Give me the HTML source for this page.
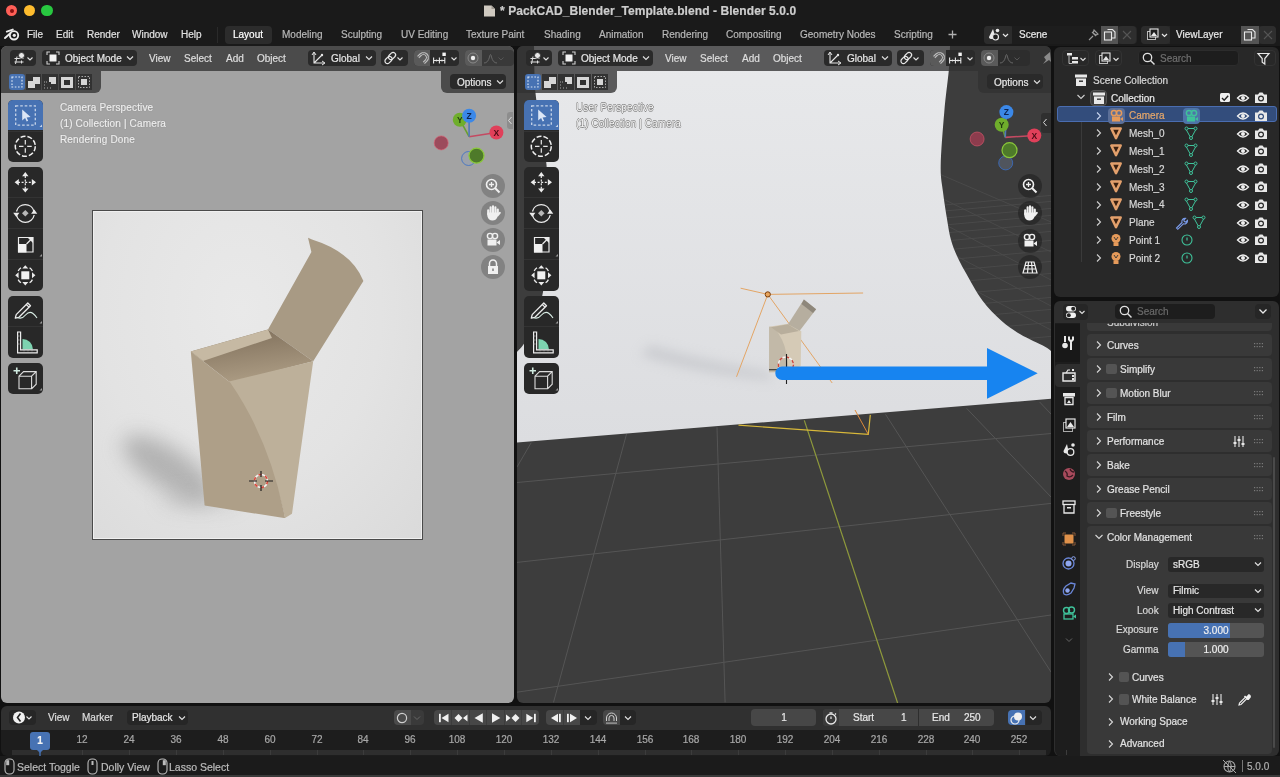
<!DOCTYPE html><html><head><meta charset="utf-8"><style>
*{margin:0;padding:0;box-sizing:border-box}
html,body{width:1280px;height:777px;overflow:hidden;background:#141414;font-family:"Liberation Sans",sans-serif;}
body{position:relative}
.a{position:absolute}
.t{position:absolute;white-space:nowrap;font-size:10px;line-height:12px;color:#dcdcdc;will-change:transform;-webkit-text-stroke:0.2px currentColor}
.btn{position:absolute;background:#2a2a2a;border-radius:4px}
svg{position:absolute;overflow:visible}
</style></head><body><div class="a" style="left:0px;top:0px;width:1280px;height:777px;background:#111111;border-radius:0px;"></div>
<div class="a" style="left:0px;top:0px;width:1280px;height:23px;background:#1a1a1a;border-radius:0px;"></div>
<div class="a" style="left:0px;top:23px;width:1280px;height:22.5px;background:#1a1a1a;border-radius:0px;"></div>
<div class="a" style="left:5.8px;top:4.8px;width:11.6px;height:11.6px;border-radius:50%;background:#ff5f57"></div>
<div class="a" style="left:23.7px;top:4.8px;width:11.6px;height:11.6px;border-radius:50%;background:#febc2e"></div>
<div class="a" style="left:41.400000000000006px;top:4.8px;width:11.6px;height:11.6px;border-radius:50%;background:#28c840"></div>
<div class="a" style="left:9.6px;top:8.6px;width:4px;height:4px;border-radius:50%;background:#8a0f0f"></div>
<svg style="left:483px;top:5px;" width="13" height="12" viewBox="0 0 13 12"><path d="M1 0.5h7.5l3.5 3.5v7.5h-11z" fill="#cfc9c0"/><path d="M8.5 0.5v3.5h3.5" fill="#9e9890"/></svg>
<div class="t" style="left:499.7px;top:4.1px;font-size:12px;line-height:14px;color:#cdcdcd;font-weight:bold;letter-spacing:0.075px">* PackCAD_Blender_Template.blend - Blender 5.0.0</div>
<svg style="left:4px;top:28px;" width="18" height="14" viewBox="0 0 18 14"><circle cx="10" cy="7.3" r="4.2" fill="none" stroke="#ececec" stroke-width="1.9"/><circle cx="10.3" cy="7.3" r="1.6" fill="#ececec"/><path d="M2.8 3.6 L8.8 1.6 M1 10 L6.6 5" stroke="#ececec" stroke-width="1.9" stroke-linecap="round"/></svg>
<div class="t" style="left:27.3px;top:28.200000000000003px;font-size:10px;line-height:14px;color:#e0e0e0;font-weight:normal;">File</div>
<div class="t" style="left:56px;top:28.200000000000003px;font-size:10px;line-height:14px;color:#e0e0e0;font-weight:normal;">Edit</div>
<div class="t" style="left:87px;top:28.200000000000003px;font-size:10px;line-height:14px;color:#e0e0e0;font-weight:normal;">Render</div>
<div class="t" style="left:132px;top:28.200000000000003px;font-size:10px;line-height:14px;color:#e0e0e0;font-weight:normal;">Window</div>
<div class="t" style="left:181px;top:28.200000000000003px;font-size:10px;line-height:14px;color:#e0e0e0;font-weight:normal;">Help</div>
<div class="a" style="left:216.5px;top:27px;width:1px;height:16px;background:#2a2a2a;border-radius:0px;"></div>
<div class="a" style="left:224.5px;top:26px;width:47px;height:18px;background:#2c2c2c;border-radius:4px;"></div>
<div class="t" style="left:232.8px;top:28.200000000000003px;font-size:10px;line-height:14px;color:#ffffff;font-weight:normal;">Layout</div>
<div class="t" style="left:281.6px;top:28.200000000000003px;font-size:10px;line-height:14px;color:#b8b8b8;font-weight:normal;">Modeling</div>
<div class="t" style="left:341px;top:28.200000000000003px;font-size:10px;line-height:14px;color:#b8b8b8;font-weight:normal;">Sculpting</div>
<div class="t" style="left:401px;top:28.200000000000003px;font-size:10px;line-height:14px;color:#b8b8b8;font-weight:normal;">UV Editing</div>
<div class="t" style="left:466px;top:28.200000000000003px;font-size:10px;line-height:14px;color:#b8b8b8;font-weight:normal;">Texture Paint</div>
<div class="t" style="left:544.4px;top:28.200000000000003px;font-size:10px;line-height:14px;color:#b8b8b8;font-weight:normal;">Shading</div>
<div class="t" style="left:599px;top:28.200000000000003px;font-size:10px;line-height:14px;color:#b8b8b8;font-weight:normal;">Animation</div>
<div class="t" style="left:662.3px;top:28.200000000000003px;font-size:10px;line-height:14px;color:#b8b8b8;font-weight:normal;">Rendering</div>
<div class="t" style="left:725.6px;top:28.200000000000003px;font-size:10px;line-height:14px;color:#b8b8b8;font-weight:normal;">Compositing</div>
<div class="t" style="left:800.3px;top:28.200000000000003px;font-size:10px;line-height:14px;color:#b8b8b8;font-weight:normal;">Geometry Nodes</div>
<div class="t" style="left:894px;top:28.200000000000003px;font-size:10px;line-height:14px;color:#b8b8b8;font-weight:normal;">Scripting</div>
<svg style="left:947.5px;top:30px;" width="9" height="9" viewBox="0 0 9 9"><path d="M4.5 0.5v8 M0.5 4.5h8" stroke="#b0b0b0" stroke-width="1.3"/></svg>
<div class="a" style="left:983.5px;top:25.5px;width:153px;height:18px;background:#262626;border-radius:4px;"></div>
<div class="a" style="left:983.5px;top:25.5px;width:29px;height:18px;background:#2c2c2c;border-radius:4px;"></div>
<div class="a" style="left:1012px;top:25.5px;width:89px;height:18px;background:#1d1d1d;border-radius:0px;"></div>
<div class="a" style="left:1101px;top:25.5px;width:17px;height:18px;background:#545454;border-radius:0px;"></div>
<div class="a" style="left:1118px;top:25.5px;width:18px;height:18px;background:#2e2e2e;border-radius:4px;"></div>
<svg style="left:987px;top:27px;" width="24" height="15" viewBox="0 0 24 15"><path d="M6 2 L2 10 Q2 12 5 12 L9 12 Z" fill="#e8e8e8"/><circle cx="10.5" cy="3.5" r="1.8" fill="#e8e8e8"/><circle cx="8.5" cy="10" r="3" fill="#1d1d1d" stroke="#e8e8e8" stroke-width="1.2"/><path d="M16 7l2.5 2.5l2.5-2.5" fill="none" stroke="#e8e8e8" stroke-width="1.2"/></svg>
<div class="t" style="left:1018.5px;top:28.200000000000003px;font-size:10px;line-height:14px;color:#e8e8e8;font-weight:normal;">Scene</div>
<svg style="left:1086px;top:27px;" width="14" height="15" viewBox="0 0 14 15"><path d="M3 13 L7 9 M6 5 L10 9 M8 3 L12 7 L10 8 L7 6 Z" fill="none" stroke="#9a9a9a" stroke-width="1.1"/></svg>
<svg style="left:1103px;top:28px;" width="14" height="13" viewBox="0 0 14 13"><rect x="1.5" y="4" width="7" height="8" fill="none" stroke="#e8e8e8" stroke-width="1.1"/><path d="M4.5 1.5h5l2.5 2.5v6h-3" fill="none" stroke="#e8e8e8" stroke-width="1.1"/></svg>
<svg style="left:1121px;top:29px;" width="12" height="11" viewBox="0 0 12 11"><path d="M2 2L10 10M10 2L2 10" stroke="#555" stroke-width="1.1"/></svg>
<div class="a" style="left:1141px;top:25.5px;width:135px;height:18px;background:#262626;border-radius:4px;"></div>
<div class="a" style="left:1141px;top:25.5px;width:29px;height:18px;background:#2c2c2c;border-radius:4px;"></div>
<div class="a" style="left:1170px;top:25.5px;width:71px;height:18px;background:#1d1d1d;border-radius:0px;"></div>
<div class="a" style="left:1241px;top:25.5px;width:18px;height:18px;background:#545454;border-radius:0px;"></div>
<div class="a" style="left:1259px;top:25.5px;width:17px;height:18px;background:#2e2e2e;border-radius:4px;"></div>
<svg style="left:1145px;top:27px;" width="24" height="15" viewBox="0 0 24 15"><rect x="2.5" y="4.5" width="8" height="8" fill="#1d1d1d" stroke="#bbb" stroke-width="1"/><rect x="5" y="2" width="8" height="8" fill="#1d1d1d" stroke="#e8e8e8" stroke-width="1.1"/><path d="M6 9 L9 5 L12 9Z" fill="#e8e8e8"/><path d="M17 7l2.5 2.5l2.5-2.5" fill="none" stroke="#e8e8e8" stroke-width="1.2"/></svg>
<div class="t" style="left:1176px;top:28.200000000000003px;font-size:10px;line-height:14px;color:#e8e8e8;font-weight:normal;">ViewLayer</div>
<svg style="left:1243px;top:28px;" width="14" height="13" viewBox="0 0 14 13"><rect x="1.5" y="4" width="7" height="8" fill="none" stroke="#e8e8e8" stroke-width="1.1"/><path d="M4.5 1.5h5l2.5 2.5v6h-3" fill="none" stroke="#e8e8e8" stroke-width="1.1"/></svg>
<svg style="left:1262px;top:29px;" width="12" height="11" viewBox="0 0 12 11"><path d="M2 2L10 10M10 2L2 10" stroke="#555" stroke-width="1.1"/></svg>
<div class="a" style="left:0px;top:756px;width:1280px;height:21px;background:#1b1b1b;border-radius:0px;"></div>
<div class="a" style="left:0px;top:775px;width:1280px;height:2px;background:#3a3a3a;border-radius:0px;"></div>
<div class="a" style="left:1px;top:46px;width:513px;height:657px;background:#a3a3a3;border-radius:6px;overflow:hidden"></div>
<div class="a" style="left:92px;top:210px;width:331px;height:330px;background:#dcdcdc;border-radius:0px;border:1px solid #4a4a4a;"></div>
<div class="a" style="left:93px;top:211px;width:329px;height:328px;background:radial-gradient(ellipse at 45% 30%,#e9e9e9 0%,#e3e3e3 55%,#dadada 100%);border:1px solid #f0f0f0"></div>
<svg style="left:0px;top:0px;" width="1280" height="777" viewBox="0 0 1280 777">
<defs>
<filter id="blur1" filterUnits="userSpaceOnUse" x="0" y="300" width="500" height="400"><feGaussianBlur stdDeviation="10"/></filter><linearGradient id="ins" x1="0" y1="0" x2="0.3" y2="1"><stop offset="0" stop-color="#7c6c58"/><stop offset="1" stop-color="#aa9a82"/></linearGradient>
</defs>
<ellipse cx="168" cy="468" rx="52" ry="20" transform="rotate(33 168 468)" fill="#8c8c8c" opacity="0.55" filter="url(#blur1)"/><ellipse cx="200" cy="500" rx="40" ry="8" fill="#9a9a9a" opacity="0.35" filter="url(#blur1)"/>
<path d="M268 329.6 L311.4 252 L308 237.7 L312 239.5 Q352 252 363.4 281 L313.2 361.3 Z" fill="#a89a84"/>

<path d="M190.8 351.6 L268 329.6 L313.2 361.3 L230.2 382.5 Z" fill="url(#ins)"/>
<path d="M190.8 351.6 L268 329.6 L272 338 L203 361Z" fill="#c6b9a3"/>
<path d="M225 382.5 L313.2 361.3 Q302 440 292 513.8 L285 518 Q268 440 225 382.5Z" fill="#bdb09a"/><path d="M190.8 351.6 L230.2 382.5 Q270 440 285 518 L284 518 L204.6 505.6 L197 420 Z" fill="#ae9f88"/>

</svg>
<svg style="left:247.5px;top:468px;" width="26" height="26" viewBox="0 0 26 26"><circle cx="13" cy="13" r="6.5" fill="none" stroke="#f2f2f2" stroke-width="1.6"/><circle cx="13" cy="13" r="6.5" fill="none" stroke="#d9483c" stroke-width="1.6" stroke-dasharray="3.4 3.4"/><path d="M1 13h8 M17 13h8 M13 3v6 M13 17v6" stroke="#1e1e1e" stroke-width="1.2"/></svg>
<div class="a" style="left:1px;top:46px;width:513px;height:25px;background:rgba(50,50,50,0.78);border-radius:0px;border-radius:6px 6px 0 0"></div>
<div class="a" style="left:1px;top:71px;width:99.5px;height:22px;background:rgba(50,50,50,0.78);border-radius:0px;border-radius:0 0 6px 0"></div>
<div class="a" style="left:9.5px;top:49.7px;width:26.7px;height:16.3px;background:#2a2a2a;border-radius:4px;"></div>
<svg style="left:13px;top:51px;" width="22" height="14" viewBox="0 0 22 14"><path d="M1.5 7.5h9 M1.5 11h9 M4 5.5l-1.5 7.5 M8.5 9.5v3" stroke="#e0e0e0" stroke-width="1" fill="none"/><circle cx="8.5" cy="4.5" r="3" fill="#e8e8e8" stroke="#2a2a2a" stroke-width="0.8"/><path d="M14.5 6.5l2.5 2.5l2.5-2.5" fill="none" stroke="#e0e0e0" stroke-width="1.1"/></svg>
<div class="a" style="left:42.3px;top:49.7px;width:94.8px;height:16.3px;background:#2a2a2a;border-radius:4px;"></div>
<svg style="left:46px;top:51px;" width="14" height="14" viewBox="0 0 14 14"><path d="M1 4V1h3 M10 1h3v3 M13 10v3h-3 M4 13H1v-3" stroke="#cfcfcf" stroke-width="1.1" fill="none"/><rect x="3.5" y="3.5" width="7" height="7" fill="#f2f2f2"/></svg>
<div class="t" style="left:64.6px;top:51.5px;font-size:10px;line-height:14px;color:#e6e6e6;font-weight:normal;">Object Mode</div>
<svg style="left:126px;top:55px;" width="8" height="6" viewBox="0 0 8 6"><path d="M1 1.5l3 3l3-3" fill="none" stroke="#e0e0e0" stroke-width="1.1"/></svg>
<div class="t" style="left:148.9px;top:51.5px;font-size:10px;line-height:14px;color:#dedede;font-weight:normal;">View</div>
<div class="t" style="left:184.2px;top:51.5px;font-size:10px;line-height:14px;color:#dedede;font-weight:normal;">Select</div>
<div class="t" style="left:225.9px;top:51.5px;font-size:10px;line-height:14px;color:#dedede;font-weight:normal;">Add</div>
<div class="t" style="left:257.4px;top:51.5px;font-size:10px;line-height:14px;color:#dedede;font-weight:normal;">Object</div>
<div class="a" style="left:308px;top:49.7px;width:67.5px;height:16.3px;background:#2a2a2a;border-radius:4px;"></div>
<svg style="left:311px;top:51px;" width="16" height="14" viewBox="0 0 16 14"><path d="M3 2v10h10 M3 12l8-8" stroke="#e6e6e6" stroke-width="1.1" fill="none"/><path d="M1 4l2-3l2 3 M11 10l3 2l-3 2" stroke="#e6e6e6" stroke-width="1" fill="none"/><circle cx="11" cy="4" r="1.2" fill="#e6e6e6"/></svg>
<div class="t" style="left:330.8px;top:51.5px;font-size:10px;line-height:14px;color:#e6e6e6;font-weight:normal;">Global</div>
<svg style="left:365px;top:55px;" width="8" height="6" viewBox="0 0 8 6"><path d="M1 1.5l3 3l3-3" fill="none" stroke="#e0e0e0" stroke-width="1.1"/></svg>
<div class="a" style="left:381.2px;top:49.7px;width:27px;height:16.3px;background:#2a2a2a;border-radius:4px;"></div>
<svg style="left:383px;top:51px;" width="22" height="14" viewBox="0 0 22 14"><rect x="1.5" y="6.5" width="8" height="5" rx="2.5" transform="rotate(-45 5.5 9)" fill="none" stroke="#e6e6e6" stroke-width="1.2"/><rect x="5" y="2.5" width="8" height="5" rx="2.5" transform="rotate(-45 9 5)" fill="none" stroke="#e6e6e6" stroke-width="1.2"/><path d="M14.5 6.5l2.5 2.5l2.5-2.5" fill="none" stroke="#e0e0e0" stroke-width="1.1"/></svg>
<div class="a" style="left:414px;top:49.7px;width:44.8px;height:16.3px;background:#2a2a2a;border-radius:4px;"></div>
<div class="a" style="left:414px;top:49.7px;width:16px;height:16.3px;background:#5a5a5a;border-radius:0px;border-radius:4px 0 0 4px"></div>
<svg style="left:414.5px;top:50.5px;" width="15" height="15" viewBox="0 0 15 15"><path d="M3.17 6.17 L5.67 3.67 A4 4 0 0 1 11.33 9.33 L8.83 11.83" fill="none" stroke="#bdbdbd" stroke-width="3"/><path d="M2.7 6.6 L5.67 3.67 A4 4 0 0 1 11.33 9.33 L8.4 12.3" fill="none" stroke="#5a5a5a" stroke-width="1"/></svg>
<svg style="left:431px;top:51px;" width="26" height="14" viewBox="0 0 26 14"><path d="M2.6 6.5v6 M8.4 6.5v6 M13.8 6.5v6 M2.6 9.5h11.2" stroke="#e6e6e6" stroke-width="1.1" fill="none"/><circle cx="5.5" cy="9.5" r="0.9" fill="#e6e6e6"/><circle cx="11" cy="9.5" r="0.9" fill="#e6e6e6"/><rect x="11.4" y="1.6" width="3.4" height="3.4" fill="#f4f4f4"/><path d="M20.5 6.5l2.5 2.5l2.5-2.5" fill="none" stroke="#e0e0e0" stroke-width="1.1"/></svg>
<div class="a" style="left:464.7px;top:49.7px;width:49px;height:16.3px;background:rgba(40,40,40,0.5);border-radius:4px;"></div>
<div class="a" style="left:464.7px;top:49.7px;width:17px;height:16.3px;background:#5a5a5a;border-radius:0px;border-radius:4px 0 0 4px"></div>
<svg style="left:466px;top:51px;" width="14" height="14" viewBox="0 0 14 14"><circle cx="7" cy="7" r="5" fill="none" stroke="#8a8a8a" stroke-width="1"/><circle cx="7" cy="7" r="2.2" fill="#f0f0f0"/></svg>
<svg style="left:483px;top:51px;" width="20" height="14" viewBox="0 0 20 14"><path d="M1 12 Q5 12 6.5 6 Q7.5 1 8.5 6 Q10 12 14 12" fill="none" stroke="#666" stroke-width="1"/><path d="M15.5 6.5l2.5 2.5l2.5-2.5" fill="none" stroke="#555" stroke-width="1"/></svg>
<div class="a" style="left:9px;top:74px;width:16px;height:15.5px;background:#4772b3;border-radius:3px;"></div>
<svg style="left:9px;top:74px;" width="16" height="16" viewBox="0 0 16 16"><rect x="3" y="3" width="10" height="10" fill="none" stroke="#dbe6f5" stroke-width="1.2" stroke-dasharray="1.6 1.6"/></svg>
<div class="a" style="left:26px;top:74px;width:15px;height:15.5px;background:#323232;border-radius:0px;"></div>
<svg style="left:26px;top:74px;" width="15" height="16" viewBox="0 0 15 16"><path d="M2 7h5V3h7v7H9v4H2z" fill="#d6d6d6"/></svg>
<div class="a" style="left:42px;top:74px;width:16px;height:15.5px;background:#323232;border-radius:0px;"></div>
<svg style="left:42px;top:74px;" width="16" height="16" viewBox="0 0 16 16"><path d="M7 3h7v7H9V8H7z" fill="#d6d6d6"/><path d="M2 8h1 M2 11h1 M2 14h1 M5 14h1 M8 14h1 M4 8h1" stroke="#aaa" stroke-width="1"/></svg>
<div class="a" style="left:59px;top:74px;width:16px;height:15.5px;background:#323232;border-radius:0px;"></div>
<svg style="left:59px;top:74px;" width="16" height="16" viewBox="0 0 16 16"><path d="M2 3h12v11H2z M5 6v5h6V6z" fill="#d6d6d6" fill-rule="evenodd"/></svg>
<div class="a" style="left:76px;top:74px;width:16px;height:15.5px;background:#323232;border-radius:0px;"></div>
<svg style="left:76px;top:74px;" width="16" height="16" viewBox="0 0 16 16"><rect x="2.5" y="2.5" width="11" height="11" fill="none" stroke="#aaa" stroke-width="1" stroke-dasharray="1.5 1.5"/><rect x="5" y="5" width="6" height="6" fill="#d6d6d6"/></svg>
<div class="a" style="left:441px;top:71px;width:73px;height:22px;background:rgba(50,50,50,0.78);border-radius:0px;border-radius:0 0 0 6px"></div>
<div class="a" style="left:450.4px;top:74px;width:55.9px;height:15.3px;background:#2a2a2a;border-radius:4px;"></div>
<div class="t" style="left:457px;top:75.5px;font-size:10px;line-height:14px;color:#e6e6e6;font-weight:normal;">Options</div>
<svg style="left:496px;top:79.3px;" width="8" height="6" viewBox="0 0 8 6"><path d="M1 1.5l3 3l3-3" fill="none" stroke="#e0e0e0" stroke-width="1.1"/></svg>
<div class="a" style="left:8.3px;top:100.3px;width:35px;height:62px;background:#282828;border-radius:5px;"></div>
<div class="a" style="left:8.3px;top:130.8px;width:35px;height:1px;background:#333333;border-radius:0px;"></div>
<div class="a" style="left:8.3px;top:166.8px;width:35px;height:124px;background:#282828;border-radius:5px;"></div>
<div class="a" style="left:8.3px;top:197.3px;width:35px;height:1px;background:#333333;border-radius:0px;"></div>
<div class="a" style="left:8.3px;top:228.3px;width:35px;height:1px;background:#333333;border-radius:0px;"></div>
<div class="a" style="left:8.3px;top:259.3px;width:35px;height:1px;background:#333333;border-radius:0px;"></div>
<div class="a" style="left:8.3px;top:295.9px;width:35px;height:62px;background:#282828;border-radius:5px;"></div>
<div class="a" style="left:8.3px;top:326.4px;width:35px;height:1px;background:#333333;border-radius:0px;"></div>
<div class="a" style="left:8.3px;top:363px;width:35px;height:31px;background:#282828;border-radius:5px;"></div>
<div class="a" style="left:8.3px;top:100.3px;width:35px;height:30px;background:#4772b3;border-radius:0px;border-radius:5px 5px 0 0"></div>
<svg style="left:8.3px;top:100.3px;" width="35" height="30" viewBox="0 0 35 30"><rect x="7.7" y="5.8" width="19.6" height="19.3" fill="none" stroke="#c6d3e8" stroke-width="1.3" stroke-dasharray="2.6 1.9"/><path d="M14.2 9.5v11l2.9-2.6l1.6 3.6l1.4-0.7l-1.5-3.4l4-0.3z" fill="#dce6f6"/><path d="M31.5 27l2.5-2.5v2.5z" fill="#c6d3e8"/></svg>
<svg style="left:8.3px;top:131px;" width="35" height="31" viewBox="0 0 35 31"><circle cx="17.3" cy="15.3" r="10" fill="none" stroke="#f0f0f0" stroke-width="1.5" stroke-dasharray="5 2"/><path d="M17.3 9v4.5 M17.3 17.2v4.5 M11 15.3h4.5 M19.2 15.3h4.5" stroke="#e8e8e8" stroke-width="1.2"/></svg>
<svg style="left:8.3px;top:166.8px;" width="35" height="31" viewBox="0 0 35 31"><path d="M17.3 9v13 M10 15.3h14.6" stroke="#ececec" stroke-width="1.2" stroke-dasharray="2 1.6"/><path d="M17.3 5l-3.2 4.2h6.4z M17.3 25.6l-3.2-4.2h6.4z M6.6 15.3l4.2-3.2v6.4z M28 15.3l-4.2-3.2v6.4z" fill="#ececec"/></svg>
<svg style="left:8.3px;top:197.8px;" width="35" height="31" viewBox="0 0 35 31"><path d="M8.5 13.5 A9 9 0 0 1 26 13.5 M26.2 17 A9 9 0 0 1 8.5 17" fill="none" stroke="#ececec" stroke-width="1.3"/><path d="M17.3 12l3.3 3.3l-3.3 3.3l-3.3-3.3z" fill="#b8b8b8"/><path d="M5.2 14.8h6.2l-3.1 4.2z M23.1 15.8h6.2l-3.1-4.2z" fill="#ececec"/></svg>
<svg style="left:8.3px;top:228.8px;" width="35" height="31" viewBox="0 0 35 31"><path d="M10.5 8.5h14.5v14.5h-14.5z" fill="none" stroke="#ececec" stroke-width="1.2"/><rect x="10" y="15" width="8.5" height="8.5" fill="#f2f2f2"/><path d="M18.5 15l5.5-5.5" stroke="#ececec" stroke-width="1.3"/><path d="M20 9h5v5z" fill="#ececec"/><path d="M31.5 27.5l2.5-2.5v2.5z" fill="#9a9a9a"/></svg>
<svg style="left:8.3px;top:259.8px;" width="35" height="31" viewBox="0 0 35 31"><path d="M10.2 11 A8.5 8.5 0 0 1 13 7.8 M21.6 7.8 A8.5 8.5 0 0 1 24.4 11 M24.4 19.6 A8.5 8.5 0 0 1 21.6 22.8 M13 22.8 A8.5 8.5 0 0 1 10.2 19.6" fill="none" stroke="#ececec" stroke-width="1.3"/><rect x="13.3" y="11.3" width="8" height="8" fill="#f2f2f2"/><path d="M17.3 5.2l-3 3.4h6z M17.3 25.4l-3-3.4h6z M7.2 15.3l3.4-3v6z M27.4 15.3l-3.4-3v6z" fill="#ececec"/></svg>
<svg style="left:8.3px;top:295.9px;" width="35" height="31" viewBox="0 0 35 31"><path d="M8.2 18.6l11.6-11.6l2.7 2.7l-11.6 11.6l-3.6 0.9z" fill="none" stroke="#ececec" stroke-width="1.3" stroke-linejoin="round"/><path d="M18.3 8.5l2.7 2.7" stroke="#ececec" stroke-width="1.2"/><path d="M9.5 21.5 Q14 23.5 17.5 19 Q21.5 14.5 25 17.5 Q27.5 19.5 29 22" fill="none" stroke="#d8ece4" stroke-width="1.1"/><path d="M31.5 27.5l2.5-2.5v2.5z" fill="#9a9a9a"/></svg>
<svg style="left:8.3px;top:326.9px;" width="35" height="31" viewBox="0 0 35 31"><path d="M14.5 22.5V12 A10.5 10.5 0 0 1 25 22.5z" fill="#7dd3b0"/><path d="M9.6 5v20.8h19.6v-3h-16.6V5z" fill="none" stroke="#ececec" stroke-width="1.2"/><path d="M9.6 9h2 M9.6 13h2 M9.6 17h2 M16 22.8v1.5 M20 22.8v1.5 M24 22.8v1.5" stroke="#aaa" stroke-width="0.8"/></svg>
<svg style="left:8.3px;top:363px;" width="35" height="31" viewBox="0 0 35 31"><path d="M11 13.2h12.6v12.6H11z M11 13.2l4.6-4.6h12.6v12.6l-4.6 4.6 M23.6 13.2l4.6-4.6" fill="none" stroke="#dcdcdc" stroke-width="1.1"/><path d="M5.5 7.8h6.5 M8.75 4.5v6.5" stroke="#cfe9df" stroke-width="1.6"/><path d="M31.5 27.5l2.5-2.5v2.5z" fill="#9a9a9a"/></svg>
<svg style="left:0px;top:0px;" width="1280" height="777" viewBox="0 0 1280 777"><circle cx="441.2" cy="142.9" r="7" fill="#9b3c50" fill-opacity="0.85" stroke="#e05a70" stroke-opacity="0.6" stroke-width="1"/><circle cx="468.6" cy="158.5" r="7" fill="#8aa0c0" fill-opacity="0.25" stroke="#3a6fc8" stroke-opacity="0.8" stroke-width="1"/><circle cx="476.5" cy="155.7" r="7.5" fill="#4e7a2a" stroke="#8ac83a" stroke-width="1.2"/><line x1="469.1" y1="136.7" x2="459.8" y2="119.7" stroke="#6aa030" stroke-width="1.6"/><line x1="469.1" y1="136.7" x2="496.4" y2="132.5" stroke="#c44a62" stroke-width="1.6"/><line x1="469.1" y1="136.7" x2="469.1" y2="115.8" stroke="#4f78b8" stroke-width="1.6"/><circle cx="459.8" cy="119.7" r="7" fill="#6fae2c"/><text x="459.8" y="122.7" font-size="8.5" font-weight="bold" text-anchor="middle" fill="#1f3a10" font-family="Liberation Sans">Y</text><circle cx="469.1" cy="115.8" r="7" fill="#3b88e8"/><text x="469.1" y="118.8" font-size="8.5" font-weight="bold" text-anchor="middle" fill="#0d2350" font-family="Liberation Sans">Z</text><circle cx="496.4" cy="132.5" r="7" fill="#e0405a"/><text x="496.4" y="135.5" font-size="8.5" font-weight="bold" text-anchor="middle" fill="#4a0a14" font-family="Liberation Sans">X</text></svg>
<div class="a" style="left:481.4px;top:173.8px;width:24px;height:24px;border-radius:50%;background:rgba(90,90,90,0.45)"></div>
<div class="a" style="left:481.4px;top:201px;width:24px;height:24px;border-radius:50%;background:rgba(90,90,90,0.45)"></div>
<div class="a" style="left:481.4px;top:227.6px;width:24px;height:24px;border-radius:50%;background:rgba(90,90,90,0.45)"></div>
<div class="a" style="left:481.4px;top:254.5px;width:24px;height:24px;border-radius:50%;background:rgba(90,90,90,0.45)"></div>
<svg style="left:481.4px;top:173.8px;" width="24" height="24" viewBox="0 0 24 24"><circle cx="10.5" cy="10.5" r="5" fill="none" stroke="#f0f0f0" stroke-width="1.6"/><path d="M14 14l4.5 4.5" stroke="#f0f0f0" stroke-width="2"/><path d="M8 10.5h5 M10.5 8v5" stroke="#f0f0f0" stroke-width="1.3"/></svg>
<svg style="left:481.4px;top:201px;" width="24" height="24" viewBox="0 0 24 24"><path d="M7.2 13.5 V9.2 M9.6 12 V6.2 M12 12 V5.3 M14.4 12 V6.2 M16.8 12.5 V8.5" stroke="#f0f0f0" stroke-width="2.1" stroke-linecap="round"/><path d="M6.2 12.5 L6.5 15.5 Q7.5 19.5 11.5 19.5 Q15 19.5 16.2 16.5 L17.8 12 L16 11.5 L6.5 11.5Z" fill="#f0f0f0"/><path d="M16.5 14.5 L18.8 11.8" stroke="#f0f0f0" stroke-width="2" stroke-linecap="round"/></svg>
<svg style="left:481.4px;top:227.6px;" width="24" height="24" viewBox="0 0 24 24"><circle cx="9" cy="8" r="2.6" fill="none" stroke="#f0f0f0" stroke-width="1.4"/><circle cx="14" cy="8" r="2.6" fill="none" stroke="#f0f0f0" stroke-width="1.4"/><rect x="6.5" y="11.5" width="9" height="6" fill="#f0f0f0"/><path d="M15.5 14.5l3.5-2.5v5z" fill="#f0f0f0"/></svg>
<svg style="left:481.4px;top:254.5px;" width="24" height="24" viewBox="0 0 24 24"><path d="M8.5 11V8.5 A3.5 3.5 0 0 1 15.5 8.5V11" fill="none" stroke="#f0f0f0" stroke-width="1.5"/><rect x="7" y="11" width="10" height="8" fill="#f0f0f0"/><rect x="11.3" y="13.5" width="1.4" height="2.5" fill="#777"/></svg>
<div class="a" style="left:507px;top:112px;width:6px;height:17px;background:rgba(120,120,120,0.5);border-radius:0px;border-radius:3px 0 0 3px"></div>
<svg style="left:507px;top:115px;" width="6" height="11" viewBox="0 0 6 11"><path d="M4.5 2l-3 3.5l3 3.5" fill="none" stroke="#ddd" stroke-width="1"/></svg>
<div class="t" style="left:60px;top:100.5px;font-size:10px;line-height:14px;color:#f0f0f0;font-weight:normal;text-shadow:0 0 1px #666;letter-spacing:0.15px">Camera Perspective</div>
<div class="t" style="left:60px;top:116.5px;font-size:10px;line-height:14px;color:#f0f0f0;font-weight:normal;text-shadow:0 0 1px #666;letter-spacing:0.15px">(1) Collection | Camera</div>
<div class="t" style="left:60px;top:132.5px;font-size:10px;line-height:14px;color:#f0f0f0;font-weight:normal;text-shadow:0 0 1px #666;letter-spacing:0.15px">Rendering Done</div>
<div class="a" style="left:517px;top:46px;width:534px;height:657px;background:#3d3d3d;border-radius:6px;overflow:hidden"></div>
<svg style="left:0px;top:0px;" width="1280" height="777" viewBox="0 0 1280 777">
<defs>
<clipPath id="rclip"><rect x="517" y="46" width="534" height="657" rx="6"/></clipPath>
<linearGradient id="bd" x1="0" y1="0" x2="0" y2="1"><stop offset="0" stop-color="#e8e9eb"/><stop offset="1" stop-color="#dcdde0"/></linearGradient>
<filter id="blur2" x="-50%" y="-50%" width="200%" height="200%"><feGaussianBlur stdDeviation="6"/></filter>
</defs>
<g clip-path="url(#rclip)">
<g stroke="#555555" stroke-width="1" fill="none">
<path d="M517 482.5 L1051 433.5"/>
<path d="M517 562.4 L1051 503.4"/>
<path d="M517 692.2 L1051 615"/>
<path d="M517 467 L531.2 442.7"/>
<path d="M626.6 433.8 L553.5 702.4"/>
<path d="M717 427.3 L725.1 702.4"/>
<path d="M885.5 414.3 L1051 672"/>
<path d="M966.6 408.3 L1051 497"/>
<path d="M1039.6 402 L1051 414"/>
</g>
<g stroke="#4c4c4c" stroke-width="0.8" fill="none"><path d="M940 205.4 L1051 195.4"/><path d="M940 211.4 L1051 201.4"/><path d="M940 218.4 L1051 208.4"/><path d="M940 225.4 L1051 215.4"/><path d="M940 233.4 L1051 223.4"/><path d="M940 241.4 L1051 231.4"/><path d="M940 250.4 L1051 240.4"/><path d="M940 260.4 L1051 250.4"/><path d="M940 271.4 L1051 261.4"/><path d="M940 283.4 L1051 273.4"/><path d="M940 295.4 L1051 285.4"/><path d="M940 307.4 L1051 297.4"/><path d="M940 319.4 L1051 309.4"/><path d="M940 332.4 L1051 322.4"/><path d="M940 346.4 L1051 336.4"/><path d="M940 361.4 L1051 351.4"/><path d="M940 377.4 L1051 367.4"/><path d="M940 395.4 L1051 385.4"/><path d="M930 170 L1051 222"/><path d="M935 195 L1051 252"/><path d="M940 222 L1051 280"/><path d="M945 250 L1051 306"/><path d="M955 280 L1051 330"/><path d="M970 310 L1051 352"/><path d="M990 340 L1051 375"/></g>
<path d="M534 46 L950 46 L950 46 C949.8 50.1 949.8 59.6 948.8 70.6 C947.8 81.6 945.6 96.1 944.3 112.0 C942.9 127.9 940.9 152.7 940.7 166.0 C940.5 179.3 942.0 183.2 943.0 192.0 C944.0 200.8 945.7 211.0 947.0 219.0 C948.3 227.0 949.3 233.8 951.0 240.0 C952.7 246.2 954.5 250.4 957.0 256.0 C959.5 261.6 962.0 266.1 966.2 273.5 C970.4 280.9 976.5 292.6 982.4 300.5 C988.3 308.4 995.1 315.2 1001.4 320.8 C1007.7 326.4 1013.1 330.0 1020.3 334.3 C1027.5 338.6 1039.5 343.7 1044.6 346.5 C1049.7 349.3 1049.9 350.2 1051.0 351.0  L1051 398.8 L517 442.6 L517 352 C518.3 350.3 521.8 347.7 525.0 342.0 C528.2 336.3 533.0 326.3 536.0 318.0 C539.0 309.7 541.2 301.7 543.0 292.0 C544.8 282.3 545.8 273.7 546.5 260.0 C547.2 246.3 547.5 225.8 547.5 210.0 C547.5 194.2 547.6 179.2 546.5 165.0 C545.4 150.8 542.8 137.0 541.0 125.0 C539.2 113.0 536.7 106.2 535.5 93.0 C534.3 79.8 534.2 53.8 534.0 46.0  Z" fill="url(#bd)"/>
<path d="M650 345 Q700 360 770 372 L772 380 Q700 375 640 355Z" fill="#b8babf" opacity="0.5" filter="url(#blur2)"/>
<path d="M804.3 420.4 L897.6 703" stroke="#8f9a3c" stroke-width="1.2"/>
<path d="M738.5 425.2 L868.3 434.4 L870.3 414.9" stroke="#d9b93a" stroke-width="1.2" fill="none"/>
<path d="M855 410 L868.3 434.4" stroke="#e08a3a" stroke-width="1" fill="none"/>
</g>
<g stroke="#e3a565" stroke-width="1" fill="none">
<path d="M740.6 288.2 L767.8 294.4 L863.1 293"/>
<path d="M767.8 294.4 L736.5 376.8"/>
<path d="M767.8 294.4 L832.2 383"/>
</g>
<path d="M769.1 326.7 L787.8 323.7 L801.3 331.2 L800.7 366 L789 372 L769.1 372.3Z" fill="#d5cab6"/>
<path d="M769.1 326.7 L774 327 Q784 340 786 352 Q788 362 789 372 L769.1 372.3Z" fill="#c2b9a8"/>
<path d="M771 327.2 L787.8 324.3 L799 331 L781 334.5Z" fill="#b8ae9c"/>
<path d="M788 324.3 L799.7 330.8 L816.1 309.3 L803.9 299.6Z" fill="#b6ae9f"/>
<path d="M803.9 299.6 L816.1 309.3 L813 313 L801.5 304Z" fill="#8e877b"/>
<circle cx="767.8" cy="294.4" r="2.6" fill="#e8a55c" stroke="#7a3e10" stroke-width="1"/>
<g><circle cx="785.9" cy="364.6" r="7.5" fill="none" stroke="#f4f4f4" stroke-width="1.5"/><circle cx="785.9" cy="364.6" r="7.5" fill="none" stroke="#c9483c" stroke-width="1.5" stroke-dasharray="3.5 3.5"/><path d="M786.5 354v30 M769 369.8h8" stroke="#222" stroke-width="1.1"/></g>
<path d="M782 366.5 L987 366.5 L987 348 L1037.7 373.2 L987 398.8 L987 379.9 L782 379.9 A6.7 6.7 0 0 1 782 366.5Z" fill="#1784f0"/>
</svg>
<div class="a" style="left:517px;top:46px;width:534px;height:25px;background:rgba(50,50,50,0.78);border-radius:0px;border-radius:6px 6px 0 0"></div>
<div class="a" style="left:517px;top:71px;width:99.5px;height:22px;background:rgba(50,50,50,0.78);border-radius:0px;border-radius:0 0 6px 0"></div>
<div class="a" style="left:525.5px;top:49.7px;width:26.7px;height:16.3px;background:#2a2a2a;border-radius:4px;"></div>
<svg style="left:529px;top:51px;" width="22" height="14" viewBox="0 0 22 14"><path d="M1.5 7.5h9 M1.5 11h9 M4 5.5l-1.5 7.5 M8.5 9.5v3" stroke="#e0e0e0" stroke-width="1" fill="none"/><circle cx="8.5" cy="4.5" r="3" fill="#e8e8e8" stroke="#2a2a2a" stroke-width="0.8"/><path d="M14.5 6.5l2.5 2.5l2.5-2.5" fill="none" stroke="#e0e0e0" stroke-width="1.1"/></svg>
<div class="a" style="left:558.3px;top:49.7px;width:94.8px;height:16.3px;background:#2a2a2a;border-radius:4px;"></div>
<svg style="left:562px;top:51px;" width="14" height="14" viewBox="0 0 14 14"><path d="M1 4V1h3 M10 1h3v3 M13 10v3h-3 M4 13H1v-3" stroke="#cfcfcf" stroke-width="1.1" fill="none"/><rect x="3.5" y="3.5" width="7" height="7" fill="#f2f2f2"/></svg>
<div class="t" style="left:580.6px;top:51.5px;font-size:10px;line-height:14px;color:#e6e6e6;font-weight:normal;">Object Mode</div>
<svg style="left:642px;top:55px;" width="8" height="6" viewBox="0 0 8 6"><path d="M1 1.5l3 3l3-3" fill="none" stroke="#e0e0e0" stroke-width="1.1"/></svg>
<div class="t" style="left:664.9px;top:51.5px;font-size:10px;line-height:14px;color:#dedede;font-weight:normal;">View</div>
<div class="t" style="left:700.2px;top:51.5px;font-size:10px;line-height:14px;color:#dedede;font-weight:normal;">Select</div>
<div class="t" style="left:741.9px;top:51.5px;font-size:10px;line-height:14px;color:#dedede;font-weight:normal;">Add</div>
<div class="t" style="left:773.4px;top:51.5px;font-size:10px;line-height:14px;color:#dedede;font-weight:normal;">Object</div>
<div class="a" style="left:824px;top:49.7px;width:67.5px;height:16.3px;background:#2a2a2a;border-radius:4px;"></div>
<svg style="left:827px;top:51px;" width="16" height="14" viewBox="0 0 16 14"><path d="M3 2v10h10 M3 12l8-8" stroke="#e6e6e6" stroke-width="1.1" fill="none"/><path d="M1 4l2-3l2 3 M11 10l3 2l-3 2" stroke="#e6e6e6" stroke-width="1" fill="none"/><circle cx="11" cy="4" r="1.2" fill="#e6e6e6"/></svg>
<div class="t" style="left:846.8px;top:51.5px;font-size:10px;line-height:14px;color:#e6e6e6;font-weight:normal;">Global</div>
<svg style="left:881px;top:55px;" width="8" height="6" viewBox="0 0 8 6"><path d="M1 1.5l3 3l3-3" fill="none" stroke="#e0e0e0" stroke-width="1.1"/></svg>
<div class="a" style="left:897.2px;top:49.7px;width:27px;height:16.3px;background:#2a2a2a;border-radius:4px;"></div>
<svg style="left:899px;top:51px;" width="22" height="14" viewBox="0 0 22 14"><rect x="1.5" y="6.5" width="8" height="5" rx="2.5" transform="rotate(-45 5.5 9)" fill="none" stroke="#e6e6e6" stroke-width="1.2"/><rect x="5" y="2.5" width="8" height="5" rx="2.5" transform="rotate(-45 9 5)" fill="none" stroke="#e6e6e6" stroke-width="1.2"/><path d="M14.5 6.5l2.5 2.5l2.5-2.5" fill="none" stroke="#e0e0e0" stroke-width="1.1"/></svg>
<div class="a" style="left:930px;top:49.7px;width:44.8px;height:16.3px;background:#2a2a2a;border-radius:4px;"></div>
<div class="a" style="left:930px;top:49.7px;width:16px;height:16.3px;background:#5a5a5a;border-radius:0px;border-radius:4px 0 0 4px"></div>
<svg style="left:930.5px;top:50.5px;" width="15" height="15" viewBox="0 0 15 15"><path d="M3.17 6.17 L5.67 3.67 A4 4 0 0 1 11.33 9.33 L8.83 11.83" fill="none" stroke="#bdbdbd" stroke-width="3"/><path d="M2.7 6.6 L5.67 3.67 A4 4 0 0 1 11.33 9.33 L8.4 12.3" fill="none" stroke="#5a5a5a" stroke-width="1"/></svg>
<svg style="left:947px;top:51px;" width="26" height="14" viewBox="0 0 26 14"><path d="M2.6 6.5v6 M8.4 6.5v6 M13.8 6.5v6 M2.6 9.5h11.2" stroke="#e6e6e6" stroke-width="1.1" fill="none"/><circle cx="5.5" cy="9.5" r="0.9" fill="#e6e6e6"/><circle cx="11" cy="9.5" r="0.9" fill="#e6e6e6"/><rect x="11.4" y="1.6" width="3.4" height="3.4" fill="#f4f4f4"/><path d="M20.5 6.5l2.5 2.5l2.5-2.5" fill="none" stroke="#e0e0e0" stroke-width="1.1"/></svg>
<div class="a" style="left:980.7px;top:49.7px;width:49px;height:16.3px;background:rgba(40,40,40,0.5);border-radius:4px;"></div>
<div class="a" style="left:980.7px;top:49.7px;width:17px;height:16.3px;background:#5a5a5a;border-radius:0px;border-radius:4px 0 0 4px"></div>
<svg style="left:982px;top:51px;" width="14" height="14" viewBox="0 0 14 14"><circle cx="7" cy="7" r="5" fill="none" stroke="#8a8a8a" stroke-width="1"/><circle cx="7" cy="7" r="2.2" fill="#f0f0f0"/></svg>
<svg style="left:999px;top:51px;" width="20" height="14" viewBox="0 0 20 14"><path d="M1 12 Q5 12 6.5 6 Q7.5 1 8.5 6 Q10 12 14 12" fill="none" stroke="#666" stroke-width="1"/><path d="M15.5 6.5l2.5 2.5l2.5-2.5" fill="none" stroke="#555" stroke-width="1"/></svg>
<div class="a" style="left:525px;top:74px;width:16px;height:15.5px;background:#4772b3;border-radius:3px;"></div>
<svg style="left:525px;top:74px;" width="16" height="16" viewBox="0 0 16 16"><rect x="3" y="3" width="10" height="10" fill="none" stroke="#dbe6f5" stroke-width="1.2" stroke-dasharray="1.6 1.6"/></svg>
<div class="a" style="left:542px;top:74px;width:15px;height:15.5px;background:#323232;border-radius:0px;"></div>
<svg style="left:542px;top:74px;" width="15" height="16" viewBox="0 0 15 16"><path d="M2 7h5V3h7v7H9v4H2z" fill="#d6d6d6"/></svg>
<div class="a" style="left:558px;top:74px;width:16px;height:15.5px;background:#323232;border-radius:0px;"></div>
<svg style="left:558px;top:74px;" width="16" height="16" viewBox="0 0 16 16"><path d="M7 3h7v7H9V8H7z" fill="#d6d6d6"/><path d="M2 8h1 M2 11h1 M2 14h1 M5 14h1 M8 14h1 M4 8h1" stroke="#aaa" stroke-width="1"/></svg>
<div class="a" style="left:575px;top:74px;width:16px;height:15.5px;background:#323232;border-radius:0px;"></div>
<svg style="left:575px;top:74px;" width="16" height="16" viewBox="0 0 16 16"><path d="M2 3h12v11H2z M5 6v5h6V6z" fill="#d6d6d6" fill-rule="evenodd"/></svg>
<div class="a" style="left:592px;top:74px;width:16px;height:15.5px;background:#323232;border-radius:0px;"></div>
<svg style="left:592px;top:74px;" width="16" height="16" viewBox="0 0 16 16"><rect x="2.5" y="2.5" width="11" height="11" fill="none" stroke="#aaa" stroke-width="1" stroke-dasharray="1.5 1.5"/><rect x="5" y="5" width="6" height="6" fill="#d6d6d6"/></svg>
<div class="a" style="left:978px;top:71px;width:73px;height:22px;background:rgba(50,50,50,0.78);border-radius:0px;border-radius:0 0 0 6px"></div>
<div class="a" style="left:987.4px;top:74px;width:55.9px;height:15.3px;background:#2a2a2a;border-radius:4px;"></div>
<div class="t" style="left:994px;top:75.5px;font-size:10px;line-height:14px;color:#e6e6e6;font-weight:normal;">Options</div>
<svg style="left:1033px;top:79.3px;" width="8" height="6" viewBox="0 0 8 6"><path d="M1 1.5l3 3l3-3" fill="none" stroke="#e0e0e0" stroke-width="1.1"/></svg>
<svg style="left:1041px;top:51px;" width="12" height="14" viewBox="0 0 12 14"><path d="M9 1 L3 6 L5 9 L2 13 L8 9 L10 11 Z" fill="#8a8a8a"/></svg>
<div class="a" style="left:524.3px;top:100.3px;width:35px;height:62px;background:#282828;border-radius:5px;"></div>
<div class="a" style="left:524.3px;top:130.8px;width:35px;height:1px;background:#333333;border-radius:0px;"></div>
<div class="a" style="left:524.3px;top:166.8px;width:35px;height:124px;background:#282828;border-radius:5px;"></div>
<div class="a" style="left:524.3px;top:197.3px;width:35px;height:1px;background:#333333;border-radius:0px;"></div>
<div class="a" style="left:524.3px;top:228.3px;width:35px;height:1px;background:#333333;border-radius:0px;"></div>
<div class="a" style="left:524.3px;top:259.3px;width:35px;height:1px;background:#333333;border-radius:0px;"></div>
<div class="a" style="left:524.3px;top:295.9px;width:35px;height:62px;background:#282828;border-radius:5px;"></div>
<div class="a" style="left:524.3px;top:326.4px;width:35px;height:1px;background:#333333;border-radius:0px;"></div>
<div class="a" style="left:524.3px;top:363px;width:35px;height:31px;background:#282828;border-radius:5px;"></div>
<div class="a" style="left:524.3px;top:100.3px;width:35px;height:30px;background:#4772b3;border-radius:0px;border-radius:5px 5px 0 0"></div>
<svg style="left:524.3px;top:100.3px;" width="35" height="30" viewBox="0 0 35 30"><rect x="7.7" y="5.8" width="19.6" height="19.3" fill="none" stroke="#c6d3e8" stroke-width="1.3" stroke-dasharray="2.6 1.9"/><path d="M14.2 9.5v11l2.9-2.6l1.6 3.6l1.4-0.7l-1.5-3.4l4-0.3z" fill="#dce6f6"/><path d="M31.5 27l2.5-2.5v2.5z" fill="#c6d3e8"/></svg>
<svg style="left:524.3px;top:131px;" width="35" height="31" viewBox="0 0 35 31"><circle cx="17.3" cy="15.3" r="10" fill="none" stroke="#f0f0f0" stroke-width="1.5" stroke-dasharray="5 2"/><path d="M17.3 9v4.5 M17.3 17.2v4.5 M11 15.3h4.5 M19.2 15.3h4.5" stroke="#e8e8e8" stroke-width="1.2"/></svg>
<svg style="left:524.3px;top:166.8px;" width="35" height="31" viewBox="0 0 35 31"><path d="M17.3 9v13 M10 15.3h14.6" stroke="#ececec" stroke-width="1.2" stroke-dasharray="2 1.6"/><path d="M17.3 5l-3.2 4.2h6.4z M17.3 25.6l-3.2-4.2h6.4z M6.6 15.3l4.2-3.2v6.4z M28 15.3l-4.2-3.2v6.4z" fill="#ececec"/></svg>
<svg style="left:524.3px;top:197.8px;" width="35" height="31" viewBox="0 0 35 31"><path d="M8.5 13.5 A9 9 0 0 1 26 13.5 M26.2 17 A9 9 0 0 1 8.5 17" fill="none" stroke="#ececec" stroke-width="1.3"/><path d="M17.3 12l3.3 3.3l-3.3 3.3l-3.3-3.3z" fill="#b8b8b8"/><path d="M5.2 14.8h6.2l-3.1 4.2z M23.1 15.8h6.2l-3.1-4.2z" fill="#ececec"/></svg>
<svg style="left:524.3px;top:228.8px;" width="35" height="31" viewBox="0 0 35 31"><path d="M10.5 8.5h14.5v14.5h-14.5z" fill="none" stroke="#ececec" stroke-width="1.2"/><rect x="10" y="15" width="8.5" height="8.5" fill="#f2f2f2"/><path d="M18.5 15l5.5-5.5" stroke="#ececec" stroke-width="1.3"/><path d="M20 9h5v5z" fill="#ececec"/><path d="M31.5 27.5l2.5-2.5v2.5z" fill="#9a9a9a"/></svg>
<svg style="left:524.3px;top:259.8px;" width="35" height="31" viewBox="0 0 35 31"><path d="M10.2 11 A8.5 8.5 0 0 1 13 7.8 M21.6 7.8 A8.5 8.5 0 0 1 24.4 11 M24.4 19.6 A8.5 8.5 0 0 1 21.6 22.8 M13 22.8 A8.5 8.5 0 0 1 10.2 19.6" fill="none" stroke="#ececec" stroke-width="1.3"/><rect x="13.3" y="11.3" width="8" height="8" fill="#f2f2f2"/><path d="M17.3 5.2l-3 3.4h6z M17.3 25.4l-3-3.4h6z M7.2 15.3l3.4-3v6z M27.4 15.3l-3.4-3v6z" fill="#ececec"/></svg>
<svg style="left:524.3px;top:295.9px;" width="35" height="31" viewBox="0 0 35 31"><path d="M8.2 18.6l11.6-11.6l2.7 2.7l-11.6 11.6l-3.6 0.9z" fill="none" stroke="#ececec" stroke-width="1.3" stroke-linejoin="round"/><path d="M18.3 8.5l2.7 2.7" stroke="#ececec" stroke-width="1.2"/><path d="M9.5 21.5 Q14 23.5 17.5 19 Q21.5 14.5 25 17.5 Q27.5 19.5 29 22" fill="none" stroke="#d8ece4" stroke-width="1.1"/><path d="M31.5 27.5l2.5-2.5v2.5z" fill="#9a9a9a"/></svg>
<svg style="left:524.3px;top:326.9px;" width="35" height="31" viewBox="0 0 35 31"><path d="M14.5 22.5V12 A10.5 10.5 0 0 1 25 22.5z" fill="#7dd3b0"/><path d="M9.6 5v20.8h19.6v-3h-16.6V5z" fill="none" stroke="#ececec" stroke-width="1.2"/><path d="M9.6 9h2 M9.6 13h2 M9.6 17h2 M16 22.8v1.5 M20 22.8v1.5 M24 22.8v1.5" stroke="#aaa" stroke-width="0.8"/></svg>
<svg style="left:524.3px;top:363px;" width="35" height="31" viewBox="0 0 35 31"><path d="M11 13.2h12.6v12.6H11z M11 13.2l4.6-4.6h12.6v12.6l-4.6 4.6 M23.6 13.2l4.6-4.6" fill="none" stroke="#dcdcdc" stroke-width="1.1"/><path d="M5.5 7.8h6.5 M8.75 4.5v6.5" stroke="#cfe9df" stroke-width="1.6"/><path d="M31.5 27.5l2.5-2.5v2.5z" fill="#9a9a9a"/></svg>
<svg style="left:0px;top:0px;" width="1280" height="777" viewBox="0 0 1280 777"><circle cx="977.1" cy="139" r="7" fill="#9b3c50" fill-opacity="0.85" stroke="#e05a70" stroke-opacity="0.6" stroke-width="1"/><circle cx="1005.7" cy="162.9" r="7" fill="#8aa0c0" fill-opacity="0.25" stroke="#3a6fc8" stroke-opacity="0.8" stroke-width="1"/><circle cx="1009.5" cy="150.2" r="7.5" fill="#4e7a2a" stroke="#8ac83a" stroke-width="1.2"/><line x1="1005.2" y1="137.4" x2="1001.7" y2="124.8" stroke="#6aa030" stroke-width="1.6"/><line x1="1005.2" y1="137.4" x2="1034.3" y2="135.5" stroke="#c44a62" stroke-width="1.6"/><line x1="1005.2" y1="137.4" x2="1006.4" y2="112.1" stroke="#4f78b8" stroke-width="1.6"/><circle cx="1001.7" cy="124.8" r="7" fill="#6fae2c"/><text x="1001.7" y="127.8" font-size="8.5" font-weight="bold" text-anchor="middle" fill="#1f3a10" font-family="Liberation Sans">Y</text><circle cx="1006.4" cy="112.1" r="7" fill="#3b88e8"/><text x="1006.4" y="115.1" font-size="8.5" font-weight="bold" text-anchor="middle" fill="#0d2350" font-family="Liberation Sans">Z</text><circle cx="1034.3" cy="135.5" r="7" fill="#e0405a"/><text x="1034.3" y="138.5" font-size="8.5" font-weight="bold" text-anchor="middle" fill="#4a0a14" font-family="Liberation Sans">X</text></svg>
<div class="a" style="left:1018.2px;top:173.5px;width:24px;height:24px;border-radius:50%;background:rgba(30,30,30,0.55)"></div>
<div class="a" style="left:1018.2px;top:201.3px;width:24px;height:24px;border-radius:50%;background:rgba(30,30,30,0.55)"></div>
<div class="a" style="left:1018.2px;top:228.7px;width:24px;height:24px;border-radius:50%;background:rgba(30,30,30,0.55)"></div>
<div class="a" style="left:1018.2px;top:254.89999999999998px;width:24px;height:24px;border-radius:50%;background:rgba(30,30,30,0.55)"></div>
<svg style="left:1018.2px;top:173.5px;" width="24" height="24" viewBox="0 0 24 24"><circle cx="10.5" cy="10.5" r="5" fill="none" stroke="#f0f0f0" stroke-width="1.6"/><path d="M14 14l4.5 4.5" stroke="#f0f0f0" stroke-width="2"/><path d="M8 10.5h5 M10.5 8v5" stroke="#f0f0f0" stroke-width="1.3"/></svg>
<svg style="left:1018.2px;top:201.3px;" width="24" height="24" viewBox="0 0 24 24"><path d="M7.2 13.5 V9.2 M9.6 12 V6.2 M12 12 V5.3 M14.4 12 V6.2 M16.8 12.5 V8.5" stroke="#f0f0f0" stroke-width="2.1" stroke-linecap="round"/><path d="M6.2 12.5 L6.5 15.5 Q7.5 19.5 11.5 19.5 Q15 19.5 16.2 16.5 L17.8 12 L16 11.5 L6.5 11.5Z" fill="#f0f0f0"/><path d="M16.5 14.5 L18.8 11.8" stroke="#f0f0f0" stroke-width="2" stroke-linecap="round"/></svg>
<svg style="left:1018.2px;top:228.7px;" width="24" height="24" viewBox="0 0 24 24"><circle cx="9" cy="8" r="2.6" fill="none" stroke="#f0f0f0" stroke-width="1.4"/><circle cx="14" cy="8" r="2.6" fill="none" stroke="#f0f0f0" stroke-width="1.4"/><rect x="6.5" y="11.5" width="9" height="6" fill="#f0f0f0"/><path d="M15.5 14.5l3.5-2.5v5z" fill="#f0f0f0"/></svg>
<svg style="left:1018.2px;top:254.89999999999998px;" width="24" height="24" viewBox="0 0 24 24"><path d="M8 7h8l3 11H5z M7 10.5h10 M6 14h12 M10.5 7l-1 11 M13.5 7l1 11" fill="none" stroke="#f0f0f0" stroke-width="1.2"/></svg>
<div class="a" style="left:1041px;top:113px;width:10px;height:20px;background:#2f2f2f;border-radius:0px;border-radius:3px 0 0 3px"></div>
<svg style="left:1041px;top:117px;" width="8" height="11" viewBox="0 0 8 11"><path d="M5.5 2l-3 3.5l3 3.5" fill="none" stroke="#ddd" stroke-width="1"/></svg>
<div class="t" style="left:576px;top:100.5px;font-size:10px;line-height:14px;color:#f4f4f4;font-weight:normal;-webkit-text-stroke:0;text-shadow:0.6px 0 0 #8a8a8a,-0.6px 0 0 #8a8a8a,0 0.6px 0 #8a8a8a,0 -0.6px 0 #8a8a8a;letter-spacing:0.1px">User Perspective</div>
<div class="t" style="left:576px;top:116.5px;font-size:10px;line-height:14px;color:#f4f4f4;font-weight:normal;-webkit-text-stroke:0;text-shadow:0.6px 0 0 #8a8a8a,-0.6px 0 0 #8a8a8a,0 0.6px 0 #8a8a8a,0 -0.6px 0 #8a8a8a;letter-spacing:0.1px">(1) Collection | Camera</div>
<div class="a" style="left:1054px;top:46.5px;width:224.5px;height:250px;background:#282828;border-radius:6px;"></div>
<div class="a" style="left:1062px;top:50.2px;width:27.3px;height:16px;background:#282828;border-radius:4px;border:1px solid #333"></div>
<svg style="left:1064px;top:51px;" width="24" height="15" viewBox="0 0 24 15"><rect x="3" y="2" width="5" height="2.5" fill="#e8e8e8"/><path d="M5 4.5v8h3" stroke="#bbb" stroke-width="1" fill="none"/><rect x="8" y="6" width="6" height="2.5" fill="#e8e8e8"/><rect x="8" y="10" width="6" height="2.5" fill="#e8e8e8"/><path d="M16.5 7l2.5 2.5l2.5-2.5" fill="none" stroke="#e0e0e0" stroke-width="1.1"/></svg>
<div class="a" style="left:1095px;top:50.2px;width:27px;height:16px;background:#282828;border-radius:4px;border:1px solid #333"></div>
<svg style="left:1097px;top:51px;" width="24" height="15" viewBox="0 0 24 15"><rect x="2.5" y="4.5" width="8" height="8" fill="#282828" stroke="#bbb" stroke-width="1"/><rect x="5" y="2" width="8" height="8" fill="#282828" stroke="#e8e8e8" stroke-width="1.1"/><path d="M6 9 L9 5 L12 9Z" fill="#e8e8e8"/><path d="M16.5 7l2.5 2.5l2.5-2.5" fill="none" stroke="#e0e0e0" stroke-width="1.1"/></svg>
<div class="a" style="left:1138px;top:50.2px;width:100.5px;height:16px;background:#1d1d1d;border-radius:4px;border:1px solid #2c2c2c"></div>
<svg style="left:1141px;top:51px;" width="16" height="15" viewBox="0 0 16 15"><circle cx="6.5" cy="6.5" r="4.2" fill="none" stroke="#e0e0e0" stroke-width="1.3"/><path d="M9.5 9.5l4 4" stroke="#e0e0e0" stroke-width="1.5"/></svg>
<div class="t" style="left:1160px;top:51.8px;font-size:10px;line-height:14px;color:#707070;font-weight:normal;">Search</div>
<div class="a" style="left:1254.4px;top:50.2px;width:22px;height:16px;background:#282828;border-radius:4px;border:1px solid #333"></div>
<svg style="left:1256px;top:51px;" width="16" height="15" viewBox="0 0 16 15"><path d="M2 2.5h11l-4.2 5v5.5l-2.6-1.8v-3.7z" fill="none" stroke="#e8e8e8" stroke-width="1.2"/></svg>
<svg style="left:1074px;top:73.3px;" width="14" height="14" viewBox="0 0 14 14"><rect x="1" y="1.5" width="12" height="3" fill="#e8e8e8"/><rect x="2" y="5.5" width="10" height="7.5" fill="#e8e8e8"/><rect x="5" y="7.5" width="4" height="1.4" fill="#282828"/></svg>
<div class="t" style="left:1093.2px;top:73.7px;font-size:10px;line-height:14px;color:#d8d8d8;font-weight:normal;">Scene Collection</div>
<svg style="left:1076px;top:92.3px;" width="10" height="10" viewBox="0 0 10 10"><path d="M1.5 3l3.5 3.5l3.5-3.5" fill="none" stroke="#d0d0d0" stroke-width="1.1"/></svg>
<div class="a" style="left:1090.2px;top:89.5px;width:16.8px;height:16px;background:#3c3c3c;border-radius:4px;border:1px solid #555"></div>
<svg style="left:1092px;top:91.3px;" width="14" height="14" viewBox="0 0 14 14"><rect x="1" y="1.5" width="12" height="3" fill="#e8e8e8"/><rect x="2" y="5.5" width="10" height="7.5" fill="#e8e8e8"/><rect x="5" y="7.5" width="4" height="1.4" fill="#3c3c3c"/></svg>
<div class="t" style="left:1111.4px;top:91.5px;font-size:10px;line-height:14px;color:#ececec;font-weight:normal;">Collection</div>
<div class="a" style="left:1220.3px;top:92.5px;width:9.5px;height:9.5px;background:#f0f0f0;border-radius:1.5px;"></div>
<svg style="left:1220.3px;top:92.5px;" width="10" height="10" viewBox="0 0 10 10"><path d="M2 5l2.2 2.2l4-4.5" fill="none" stroke="#222" stroke-width="1.4"/></svg>
<svg style="left:1236px;top:92.0px;" width="14" height="12" viewBox="0 0 14 12"><path d="M1.5 6 Q7 0 12.5 6 Q7 12 1.5 6Z" fill="none" stroke="#f0f0f0" stroke-width="1.3"/><circle cx="7" cy="6" r="2" fill="#f0f0f0"/></svg>
<svg style="left:1254px;top:91.0px;" width="14" height="13" viewBox="0 0 14 13"><path d="M1 3.5h3l1.5-2h3l1.5 2h3v8.5H1z" fill="#e8e8e8"/><circle cx="7" cy="7.5" r="3" fill="#282828"/><circle cx="7" cy="7.5" r="1.8" fill="#e8e8e8"/></svg>
<div class="a" style="left:1080.5px;top:106px;width:1px;height:156px;background:#3a3a3a;border-radius:0px;"></div>
<div class="a" style="left:1057.2px;top:106.4px;width:219.6px;height:16px;background:#334d7c;border-radius:3px;border:1px solid #4a6db0"></div>
<svg style="left:1094px;top:110.50000000000001px;" width="10" height="10" viewBox="0 0 10 10"><path d="M3 1.5l3.5 3.5l-3.5 3.5" fill="none" stroke="#c8d4ee" stroke-width="1.1"/></svg>
<svg style="left:1107.7px;top:107.80000000000001px;" width="17" height="16" viewBox="0 0 17 16"><rect x="0" y="0" width="17" height="16" rx="4" fill="#5b6f98"/><circle cx="6" cy="5" r="2.6" fill="none" stroke="#e59a5a" stroke-width="1.5"/><circle cx="11" cy="5" r="2.6" fill="none" stroke="#e59a5a" stroke-width="1.5"/><rect x="4" y="8.5" width="8" height="5" fill="#e59a5a"/><path d="M12 11l3-2v4z" fill="#e59a5a"/></svg>
<div class="t" style="left:1129px;top:109.30000000000001px;font-size:10px;line-height:14px;color:#e8a86a;font-weight:normal;">Camera</div>
<svg style="left:1182.5px;top:107.80000000000001px;" width="17" height="16" viewBox="0 0 17 16"><rect x="0" y="0" width="17" height="16" rx="4" fill="#4e74a8"/><circle cx="6" cy="5" r="2.6" fill="none" stroke="#3fc29a" stroke-width="1.5"/><circle cx="11" cy="5" r="2.6" fill="none" stroke="#3fc29a" stroke-width="1.5"/><rect x="4" y="8.5" width="8" height="5" fill="#3fc29a"/><path d="M12 11l3-2v4z" fill="#3fc29a"/></svg>
<svg style="left:1236px;top:109.80000000000001px;" width="14" height="12" viewBox="0 0 14 12"><path d="M1.5 6 Q7 0 12.5 6 Q7 12 1.5 6Z" fill="none" stroke="#f0f0f0" stroke-width="1.3"/><circle cx="7" cy="6" r="2" fill="#f0f0f0"/></svg>
<svg style="left:1254px;top:108.80000000000001px;" width="14" height="13" viewBox="0 0 14 13"><path d="M1 3.5h3l1.5-2h3l1.5 2h3v8.5H1z" fill="#e8e8e8"/><circle cx="7" cy="7.5" r="3" fill="#334d7c"/><circle cx="7" cy="7.5" r="1.8" fill="#e8e8e8"/></svg>
<svg style="left:1094px;top:128.3px;" width="10" height="10" viewBox="0 0 10 10"><path d="M3 1.5l3.5 3.5l-3.5 3.5" fill="none" stroke="#d0d0d0" stroke-width="1.1"/></svg>
<svg style="left:1109.4px;top:125.60000000000002px;" width="14" height="14" viewBox="0 0 14 14"><path d="M2.3 2.5h9.4l-4.7 9.6z" fill="#3a2010" stroke="#e3a06c" stroke-width="2.5" stroke-linejoin="round"/></svg>
<div class="t" style="left:1129px;top:127.10000000000002px;font-size:10px;line-height:14px;color:#d8d8d8;font-weight:normal;">Mesh_0</div>
<svg style="left:1183.5px;top:125.60000000000002px;" width="14" height="14" viewBox="0 0 14 14"><path d="M3.8 2.5h6.4 M11.7 3.8l-4 7.3 M6.3 11.1l-4-7.3" fill="none" stroke="#3fc29a" stroke-width="1"/><circle cx="2.5" cy="2.5" r="1.5" fill="#282828" stroke="#3fc29a" stroke-width="1"/><circle cx="11.5" cy="2.5" r="1.5" fill="#282828" stroke="#3fc29a" stroke-width="1"/><circle cx="7" cy="12" r="1.5" fill="#282828" stroke="#3fc29a" stroke-width="1"/></svg>
<svg style="left:1236px;top:127.60000000000002px;" width="14" height="12" viewBox="0 0 14 12"><path d="M1.5 6 Q7 0 12.5 6 Q7 12 1.5 6Z" fill="none" stroke="#f0f0f0" stroke-width="1.3"/><circle cx="7" cy="6" r="2" fill="#f0f0f0"/></svg>
<svg style="left:1254px;top:126.60000000000002px;" width="14" height="13" viewBox="0 0 14 13"><path d="M1 3.5h3l1.5-2h3l1.5 2h3v8.5H1z" fill="#e8e8e8"/><circle cx="7" cy="7.5" r="3" fill="#282828"/><circle cx="7" cy="7.5" r="1.8" fill="#e8e8e8"/></svg>
<svg style="left:1094px;top:146.1px;" width="10" height="10" viewBox="0 0 10 10"><path d="M3 1.5l3.5 3.5l-3.5 3.5" fill="none" stroke="#d0d0d0" stroke-width="1.1"/></svg>
<svg style="left:1109.4px;top:143.4px;" width="14" height="14" viewBox="0 0 14 14"><path d="M2.3 2.5h9.4l-4.7 9.6z" fill="#3a2010" stroke="#e3a06c" stroke-width="2.5" stroke-linejoin="round"/></svg>
<div class="t" style="left:1129px;top:144.9px;font-size:10px;line-height:14px;color:#d8d8d8;font-weight:normal;">Mesh_1</div>
<svg style="left:1183.5px;top:143.4px;" width="14" height="14" viewBox="0 0 14 14"><path d="M3.8 2.5h6.4 M11.7 3.8l-4 7.3 M6.3 11.1l-4-7.3" fill="none" stroke="#3fc29a" stroke-width="1"/><circle cx="2.5" cy="2.5" r="1.5" fill="#282828" stroke="#3fc29a" stroke-width="1"/><circle cx="11.5" cy="2.5" r="1.5" fill="#282828" stroke="#3fc29a" stroke-width="1"/><circle cx="7" cy="12" r="1.5" fill="#282828" stroke="#3fc29a" stroke-width="1"/></svg>
<svg style="left:1236px;top:145.4px;" width="14" height="12" viewBox="0 0 14 12"><path d="M1.5 6 Q7 0 12.5 6 Q7 12 1.5 6Z" fill="none" stroke="#f0f0f0" stroke-width="1.3"/><circle cx="7" cy="6" r="2" fill="#f0f0f0"/></svg>
<svg style="left:1254px;top:144.4px;" width="14" height="13" viewBox="0 0 14 13"><path d="M1 3.5h3l1.5-2h3l1.5 2h3v8.5H1z" fill="#e8e8e8"/><circle cx="7" cy="7.5" r="3" fill="#282828"/><circle cx="7" cy="7.5" r="1.8" fill="#e8e8e8"/></svg>
<svg style="left:1094px;top:163.89999999999998px;" width="10" height="10" viewBox="0 0 10 10"><path d="M3 1.5l3.5 3.5l-3.5 3.5" fill="none" stroke="#d0d0d0" stroke-width="1.1"/></svg>
<svg style="left:1109.4px;top:161.2px;" width="14" height="14" viewBox="0 0 14 14"><path d="M2.3 2.5h9.4l-4.7 9.6z" fill="#3a2010" stroke="#e3a06c" stroke-width="2.5" stroke-linejoin="round"/></svg>
<div class="t" style="left:1129px;top:162.7px;font-size:10px;line-height:14px;color:#d8d8d8;font-weight:normal;">Mesh_2</div>
<svg style="left:1183.5px;top:161.2px;" width="14" height="14" viewBox="0 0 14 14"><path d="M3.8 2.5h6.4 M11.7 3.8l-4 7.3 M6.3 11.1l-4-7.3" fill="none" stroke="#3fc29a" stroke-width="1"/><circle cx="2.5" cy="2.5" r="1.5" fill="#282828" stroke="#3fc29a" stroke-width="1"/><circle cx="11.5" cy="2.5" r="1.5" fill="#282828" stroke="#3fc29a" stroke-width="1"/><circle cx="7" cy="12" r="1.5" fill="#282828" stroke="#3fc29a" stroke-width="1"/></svg>
<svg style="left:1236px;top:163.2px;" width="14" height="12" viewBox="0 0 14 12"><path d="M1.5 6 Q7 0 12.5 6 Q7 12 1.5 6Z" fill="none" stroke="#f0f0f0" stroke-width="1.3"/><circle cx="7" cy="6" r="2" fill="#f0f0f0"/></svg>
<svg style="left:1254px;top:162.2px;" width="14" height="13" viewBox="0 0 14 13"><path d="M1 3.5h3l1.5-2h3l1.5 2h3v8.5H1z" fill="#e8e8e8"/><circle cx="7" cy="7.5" r="3" fill="#282828"/><circle cx="7" cy="7.5" r="1.8" fill="#e8e8e8"/></svg>
<svg style="left:1094px;top:181.7px;" width="10" height="10" viewBox="0 0 10 10"><path d="M3 1.5l3.5 3.5l-3.5 3.5" fill="none" stroke="#d0d0d0" stroke-width="1.1"/></svg>
<svg style="left:1109.4px;top:179.0px;" width="14" height="14" viewBox="0 0 14 14"><path d="M2.3 2.5h9.4l-4.7 9.6z" fill="#3a2010" stroke="#e3a06c" stroke-width="2.5" stroke-linejoin="round"/></svg>
<div class="t" style="left:1129px;top:180.5px;font-size:10px;line-height:14px;color:#d8d8d8;font-weight:normal;">Mesh_3</div>
<svg style="left:1183.5px;top:179.0px;" width="14" height="14" viewBox="0 0 14 14"><path d="M3.8 2.5h6.4 M11.7 3.8l-4 7.3 M6.3 11.1l-4-7.3" fill="none" stroke="#3fc29a" stroke-width="1"/><circle cx="2.5" cy="2.5" r="1.5" fill="#282828" stroke="#3fc29a" stroke-width="1"/><circle cx="11.5" cy="2.5" r="1.5" fill="#282828" stroke="#3fc29a" stroke-width="1"/><circle cx="7" cy="12" r="1.5" fill="#282828" stroke="#3fc29a" stroke-width="1"/></svg>
<svg style="left:1236px;top:181.0px;" width="14" height="12" viewBox="0 0 14 12"><path d="M1.5 6 Q7 0 12.5 6 Q7 12 1.5 6Z" fill="none" stroke="#f0f0f0" stroke-width="1.3"/><circle cx="7" cy="6" r="2" fill="#f0f0f0"/></svg>
<svg style="left:1254px;top:180.0px;" width="14" height="13" viewBox="0 0 14 13"><path d="M1 3.5h3l1.5-2h3l1.5 2h3v8.5H1z" fill="#e8e8e8"/><circle cx="7" cy="7.5" r="3" fill="#282828"/><circle cx="7" cy="7.5" r="1.8" fill="#e8e8e8"/></svg>
<svg style="left:1094px;top:199.5px;" width="10" height="10" viewBox="0 0 10 10"><path d="M3 1.5l3.5 3.5l-3.5 3.5" fill="none" stroke="#d0d0d0" stroke-width="1.1"/></svg>
<svg style="left:1109.4px;top:196.8px;" width="14" height="14" viewBox="0 0 14 14"><path d="M2.3 2.5h9.4l-4.7 9.6z" fill="#3a2010" stroke="#e3a06c" stroke-width="2.5" stroke-linejoin="round"/></svg>
<div class="t" style="left:1129px;top:198.3px;font-size:10px;line-height:14px;color:#d8d8d8;font-weight:normal;">Mesh_4</div>
<svg style="left:1183.5px;top:196.8px;" width="14" height="14" viewBox="0 0 14 14"><path d="M3.8 2.5h6.4 M11.7 3.8l-4 7.3 M6.3 11.1l-4-7.3" fill="none" stroke="#3fc29a" stroke-width="1"/><circle cx="2.5" cy="2.5" r="1.5" fill="#282828" stroke="#3fc29a" stroke-width="1"/><circle cx="11.5" cy="2.5" r="1.5" fill="#282828" stroke="#3fc29a" stroke-width="1"/><circle cx="7" cy="12" r="1.5" fill="#282828" stroke="#3fc29a" stroke-width="1"/></svg>
<svg style="left:1236px;top:198.8px;" width="14" height="12" viewBox="0 0 14 12"><path d="M1.5 6 Q7 0 12.5 6 Q7 12 1.5 6Z" fill="none" stroke="#f0f0f0" stroke-width="1.3"/><circle cx="7" cy="6" r="2" fill="#f0f0f0"/></svg>
<svg style="left:1254px;top:197.8px;" width="14" height="13" viewBox="0 0 14 13"><path d="M1 3.5h3l1.5-2h3l1.5 2h3v8.5H1z" fill="#e8e8e8"/><circle cx="7" cy="7.5" r="3" fill="#282828"/><circle cx="7" cy="7.5" r="1.8" fill="#e8e8e8"/></svg>
<svg style="left:1094px;top:217.3px;" width="10" height="10" viewBox="0 0 10 10"><path d="M3 1.5l3.5 3.5l-3.5 3.5" fill="none" stroke="#d0d0d0" stroke-width="1.1"/></svg>
<svg style="left:1109.4px;top:214.60000000000002px;" width="14" height="14" viewBox="0 0 14 14"><path d="M2.3 2.5h9.4l-4.7 9.6z" fill="#3a2010" stroke="#e3a06c" stroke-width="2.5" stroke-linejoin="round"/></svg>
<div class="t" style="left:1129px;top:216.10000000000002px;font-size:10px;line-height:14px;color:#d8d8d8;font-weight:normal;">Plane</div>
<svg style="left:1174px;top:215.60000000000002px;" width="14" height="14" viewBox="0 0 14 14"><path d="M2.5 12 L8 6.5 A3.2 3.2 0 0 1 11.5 2.3 L9.8 4 L10.3 5.5 L11.8 6 L13.5 4.3 A3.2 3.2 0 0 1 9.3 7.8 L3.8 13.3Z" fill="none" stroke="#7a9ae8" stroke-width="1.1"/></svg>
<svg style="left:1192px;top:214.60000000000002px;" width="14" height="14" viewBox="0 0 14 14"><path d="M3.8 2.5h6.4 M11.7 3.8l-4 7.3 M6.3 11.1l-4-7.3" fill="none" stroke="#3fc29a" stroke-width="1"/><circle cx="2.5" cy="2.5" r="1.5" fill="#282828" stroke="#3fc29a" stroke-width="1"/><circle cx="11.5" cy="2.5" r="1.5" fill="#282828" stroke="#3fc29a" stroke-width="1"/><circle cx="7" cy="12" r="1.5" fill="#282828" stroke="#3fc29a" stroke-width="1"/></svg>
<svg style="left:1236px;top:216.60000000000002px;" width="14" height="12" viewBox="0 0 14 12"><path d="M1.5 6 Q7 0 12.5 6 Q7 12 1.5 6Z" fill="none" stroke="#f0f0f0" stroke-width="1.3"/><circle cx="7" cy="6" r="2" fill="#f0f0f0"/></svg>
<svg style="left:1254px;top:215.60000000000002px;" width="14" height="13" viewBox="0 0 14 13"><path d="M1 3.5h3l1.5-2h3l1.5 2h3v8.5H1z" fill="#e8e8e8"/><circle cx="7" cy="7.5" r="3" fill="#282828"/><circle cx="7" cy="7.5" r="1.8" fill="#e8e8e8"/></svg>
<svg style="left:1094px;top:235.10000000000002px;" width="10" height="10" viewBox="0 0 10 10"><path d="M3 1.5l3.5 3.5l-3.5 3.5" fill="none" stroke="#d0d0d0" stroke-width="1.1"/></svg>
<svg style="left:1109.4px;top:233.40000000000003px;" width="14" height="14" viewBox="0 0 14 14"><circle cx="7" cy="5.5" r="4.5" fill="#e59a5a"/><rect x="4.5" y="9.5" width="5" height="3.5" fill="#e59a5a"/><path d="M5 4l2 3l2-3" stroke="#333" stroke-width="0.9" fill="none"/></svg>
<div class="t" style="left:1129px;top:233.90000000000003px;font-size:10px;line-height:14px;color:#d8d8d8;font-weight:normal;">Point 1</div>
<svg style="left:1180.4px;top:233.40000000000003px;" width="14" height="14" viewBox="0 0 14 14"><circle cx="7" cy="7" r="5" fill="none" stroke="#3fc29a" stroke-width="1.1"/><path d="M7 4.5v3" stroke="#3fc29a" stroke-width="1.2"/></svg>
<svg style="left:1236px;top:234.40000000000003px;" width="14" height="12" viewBox="0 0 14 12"><path d="M1.5 6 Q7 0 12.5 6 Q7 12 1.5 6Z" fill="none" stroke="#f0f0f0" stroke-width="1.3"/><circle cx="7" cy="6" r="2" fill="#f0f0f0"/></svg>
<svg style="left:1254px;top:233.40000000000003px;" width="14" height="13" viewBox="0 0 14 13"><path d="M1 3.5h3l1.5-2h3l1.5 2h3v8.5H1z" fill="#e8e8e8"/><circle cx="7" cy="7.5" r="3" fill="#282828"/><circle cx="7" cy="7.5" r="1.8" fill="#e8e8e8"/></svg>
<svg style="left:1094px;top:252.89999999999998px;" width="10" height="10" viewBox="0 0 10 10"><path d="M3 1.5l3.5 3.5l-3.5 3.5" fill="none" stroke="#d0d0d0" stroke-width="1.1"/></svg>
<svg style="left:1109.4px;top:251.2px;" width="14" height="14" viewBox="0 0 14 14"><circle cx="7" cy="5.5" r="4.5" fill="#e59a5a"/><rect x="4.5" y="9.5" width="5" height="3.5" fill="#e59a5a"/><path d="M5 4l2 3l2-3" stroke="#333" stroke-width="0.9" fill="none"/></svg>
<div class="t" style="left:1129px;top:251.7px;font-size:10px;line-height:14px;color:#d8d8d8;font-weight:normal;">Point 2</div>
<svg style="left:1180.4px;top:251.2px;" width="14" height="14" viewBox="0 0 14 14"><circle cx="7" cy="7" r="5" fill="none" stroke="#3fc29a" stroke-width="1.1"/><path d="M7 4.5v3" stroke="#3fc29a" stroke-width="1.2"/></svg>
<svg style="left:1236px;top:252.2px;" width="14" height="12" viewBox="0 0 14 12"><path d="M1.5 6 Q7 0 12.5 6 Q7 12 1.5 6Z" fill="none" stroke="#f0f0f0" stroke-width="1.3"/><circle cx="7" cy="6" r="2" fill="#f0f0f0"/></svg>
<svg style="left:1254px;top:251.2px;" width="14" height="13" viewBox="0 0 14 13"><path d="M1 3.5h3l1.5-2h3l1.5 2h3v8.5H1z" fill="#e8e8e8"/><circle cx="7" cy="7.5" r="3" fill="#282828"/><circle cx="7" cy="7.5" r="1.8" fill="#e8e8e8"/></svg>
<div class="a" style="left:1054px;top:300.5px;width:224.5px;height:455.5px;background:#2e2e2e;border-radius:6px;"></div>
<div class="a" style="left:1063.2px;top:304px;width:25.2px;height:15.8px;background:#262626;border-radius:4px;"></div>
<svg style="left:1064px;top:305px;" width="24" height="14" viewBox="0 0 24 14"><rect x="2" y="1" width="10" height="5.5" rx="2.75" fill="#f0f0f0"/><circle cx="9.2" cy="3.75" r="2" fill="#262626"/><rect x="2" y="7.5" width="10" height="5.5" rx="2.75" fill="#f0f0f0"/><circle cx="4.8" cy="10.25" r="2" fill="#262626"/><path d="M15.5 6l2.5 2.5l2.5-2.5" fill="none" stroke="#e0e0e0" stroke-width="1.1"/></svg>
<div class="a" style="left:1115.4px;top:304px;width:100px;height:15px;background:#1d1d1d;border-radius:4px;"></div>
<svg style="left:1118px;top:304px;" width="16" height="15" viewBox="0 0 16 15"><circle cx="6.5" cy="6.5" r="4.2" fill="none" stroke="#e0e0e0" stroke-width="1.3"/><path d="M9.5 9.5l4 4" stroke="#e0e0e0" stroke-width="1.5"/></svg>
<div class="t" style="left:1137.3px;top:305.3px;font-size:10px;line-height:14px;color:#6a6a6a;font-weight:normal;">Search</div>
<div class="a" style="left:1255.3px;top:304px;width:15.5px;height:15px;background:#262626;border-radius:4px;"></div>
<svg style="left:1258px;top:308px;" width="10" height="7" viewBox="0 0 10 7"><path d="M1.5 1.5l3.5 3.5l3.5-3.5" fill="none" stroke="#e8e8e8" stroke-width="1.3"/></svg>
<div class="a" style="left:1055px;top:323px;width:25px;height:433px;background:#1d1d1d;border-radius:0px;border-radius:0 0 0 6px"></div>
<div class="a" style="left:1055px;top:324px;width:25px;height:38px;background:#181818;border-radius:0px;"></div>
<div class="a" style="left:1055px;top:364px;width:25px;height:22.5px;background:#2e2e2e;border-radius:0px;border-radius:4px 0 0 4px"></div>
<svg style="left:1060.5px;top:334.7px;" width="16" height="16" viewBox="0 0 16 16"><rect x="3" y="1" width="2" height="6" fill="#e8e8e8"/><circle cx="4" cy="10.5" r="2.8" fill="#e8e8e8"/><path d="M10 15V7 M8 1.5v3l2 2l2-2v-3" stroke="#e8e8e8" stroke-width="2" fill="none"/></svg>
<svg style="left:1060.5px;top:366.6px;" width="16" height="16" viewBox="0 0 16 16"><path d="M2 6h12v8H2z" fill="none" stroke="#e8e8e8" stroke-width="1.4"/><path d="M5 6l2-3h2" stroke="#e8e8e8" stroke-width="1.2" fill="none"/><rect x="11" y="2" width="2" height="2" fill="#e8e8e8"/><rect x="11" y="8" width="2" height="2" fill="#e8e8e8"/><rect x="11" y="11" width="2" height="2" fill="#e8e8e8"/></svg>
<svg style="left:1060.5px;top:391.4px;" width="16" height="16" viewBox="0 0 16 16"><rect x="2" y="2" width="12" height="3.5" fill="#e8e8e8"/><path d="M4 6.5h8v7H4z" fill="none" stroke="#e8e8e8" stroke-width="1.3"/><path d="M6 12l2-3l2 3z" fill="#e8e8e8"/></svg>
<svg style="left:1060.5px;top:417.2px;" width="16" height="16" viewBox="0 0 16 16"><rect x="2.5" y="5.5" width="9" height="9" fill="none" stroke="#aaa" stroke-width="1"/><rect x="5" y="2" width="9" height="9" fill="#1d1d1d" stroke="#e8e8e8" stroke-width="1.2"/><path d="M6 10L9.5 5L13 10z" fill="#e8e8e8"/></svg>
<svg style="left:1060.5px;top:440.9px;" width="16" height="16" viewBox="0 0 16 16"><path d="M6 3L2.5 10Q2.5 12.5 5.5 12.5L8 12.5Z" fill="#e8e8e8"/><circle cx="12" cy="4" r="1.8" fill="#e8e8e8"/><circle cx="9.5" cy="11" r="3.3" fill="#1d1d1d" stroke="#e8e8e8" stroke-width="1.3"/></svg>
<svg style="left:1060.5px;top:465.6px;" width="16" height="16" viewBox="0 0 16 16"><circle cx="8" cy="8" r="6" fill="#a84a5c"/><path d="M4 5Q7 7 6 10Q9 12 12 9M9 3Q10 6 13 6" stroke="#3a1a22" stroke-width="1.3" fill="none"/></svg>
<svg style="left:1060.5px;top:498.6px;" width="16" height="16" viewBox="0 0 16 16"><rect x="2" y="2" width="12" height="3.5" fill="none" stroke="#e8e8e8" stroke-width="1.3"/><path d="M3 6v8h10V6" fill="none" stroke="#e8e8e8" stroke-width="1.3"/><rect x="6" y="8" width="4" height="1.5" fill="#e8e8e8"/></svg>
<svg style="left:1060.5px;top:531px;" width="16" height="16" viewBox="0 0 16 16"><path d="M2 5V2h3 M11 2h3v3 M14 11v3h-3 M5 14H2v-3" stroke="#8a5a3a" stroke-width="1" fill="none"/><rect x="3.5" y="3.5" width="9" height="9" fill="#e0914a"/></svg>
<svg style="left:1060.5px;top:555.2px;" width="16" height="16" viewBox="0 0 16 16"><circle cx="7.5" cy="8.5" r="5.5" fill="none" stroke="#6a86d8" stroke-width="1.3"/><circle cx="7.5" cy="8.5" r="3" fill="#8ea6f0"/><circle cx="12.5" cy="3.5" r="1.8" fill="#1d1d1d" stroke="#8ea6f0" stroke-width="1"/></svg>
<svg style="left:1060.5px;top:580.7px;" width="16" height="16" viewBox="0 0 16 16"><path d="M3 13Q1 9 5 5L10 2L14 3L13 7L10 12Q6 15 3 13Z" fill="none" stroke="#6a86d8" stroke-width="1.3"/><circle cx="6.5" cy="9.5" r="2.2" fill="#8ea6f0"/></svg>
<svg style="left:1060.5px;top:605px;" width="16" height="16" viewBox="0 0 16 16"><circle cx="5.5" cy="5.5" r="3" fill="none" stroke="#3fc29a" stroke-width="1.4"/><circle cx="10.5" cy="5" r="3" fill="none" stroke="#3fc29a" stroke-width="1.4"/><rect x="3" y="9" width="9" height="5" fill="none" stroke="#3fc29a" stroke-width="1.3"/><path d="M12 11.5l3-2v4z" fill="#3fc29a"/></svg>
<svg style="left:1064.5px;top:637px;" width="8" height="6" viewBox="0 0 8 6"><path d="M1 1.5l3 3l3-3" fill="none" stroke="#666" stroke-width="1"/></svg>
<div class="a" style="left:1087.2px;top:323px;width:184.79999999999995px;height:8.3px;background:#393939;border-radius:0px;border-radius:0 0 4px 4px"></div>
<div class="t" style="left:1106.6px;top:315.5px;font-size:10px;line-height:14px;color:#cfcfcf;font-weight:normal;clip-path:inset(7.5px 0 0 0)">Subdivision</div>
<div class="a" style="left:1087.2px;top:334px;width:184.79999999999995px;height:21.7px;background:#393939;border-radius:4px;"></div>
<svg style="left:1094px;top:340px;" width="10" height="10" viewBox="0 0 10 10"><path d="M3 1.5l3.5 3.5l-3.5 3.5" fill="none" stroke="#d8d8d8" stroke-width="1.1"/></svg>
<div class="t" style="left:1106.6px;top:338.5px;font-size:10px;line-height:14px;color:#e2e2e2;font-weight:normal;">Curves</div>
<svg style="left:1254px;top:342.5px;" width="12" height="6" viewBox="0 0 12 6"><rect x="0.0" y="0" width="1.2" height="1.2" fill="#7a7a7a"/><rect x="0.0" y="3" width="1.2" height="1.2" fill="#7a7a7a"/><rect x="2.6" y="0" width="1.2" height="1.2" fill="#7a7a7a"/><rect x="2.6" y="3" width="1.2" height="1.2" fill="#7a7a7a"/><rect x="5.2" y="0" width="1.2" height="1.2" fill="#7a7a7a"/><rect x="5.2" y="3" width="1.2" height="1.2" fill="#7a7a7a"/><rect x="7.800000000000001" y="0" width="1.2" height="1.2" fill="#7a7a7a"/><rect x="7.800000000000001" y="3" width="1.2" height="1.2" fill="#7a7a7a"/></svg>
<div class="a" style="left:1087.2px;top:358px;width:184.79999999999995px;height:21.7px;background:#393939;border-radius:4px;"></div>
<svg style="left:1094px;top:364px;" width="10" height="10" viewBox="0 0 10 10"><path d="M3 1.5l3.5 3.5l-3.5 3.5" fill="none" stroke="#d8d8d8" stroke-width="1.1"/></svg>
<div class="a" style="left:1106px;top:363.5px;width:10.5px;height:10.5px;background:#545454;border-radius:2px;"></div>
<div class="t" style="left:1119.7px;top:362.5px;font-size:10px;line-height:14px;color:#e2e2e2;font-weight:normal;">Simplify</div>
<svg style="left:1254px;top:366.5px;" width="12" height="6" viewBox="0 0 12 6"><rect x="0.0" y="0" width="1.2" height="1.2" fill="#7a7a7a"/><rect x="0.0" y="3" width="1.2" height="1.2" fill="#7a7a7a"/><rect x="2.6" y="0" width="1.2" height="1.2" fill="#7a7a7a"/><rect x="2.6" y="3" width="1.2" height="1.2" fill="#7a7a7a"/><rect x="5.2" y="0" width="1.2" height="1.2" fill="#7a7a7a"/><rect x="5.2" y="3" width="1.2" height="1.2" fill="#7a7a7a"/><rect x="7.800000000000001" y="0" width="1.2" height="1.2" fill="#7a7a7a"/><rect x="7.800000000000001" y="3" width="1.2" height="1.2" fill="#7a7a7a"/></svg>
<div class="a" style="left:1087.2px;top:382px;width:184.79999999999995px;height:21.7px;background:#393939;border-radius:4px;"></div>
<svg style="left:1094px;top:388px;" width="10" height="10" viewBox="0 0 10 10"><path d="M3 1.5l3.5 3.5l-3.5 3.5" fill="none" stroke="#d8d8d8" stroke-width="1.1"/></svg>
<div class="a" style="left:1106px;top:387.5px;width:10.5px;height:10.5px;background:#545454;border-radius:2px;"></div>
<div class="t" style="left:1119.7px;top:386.5px;font-size:10px;line-height:14px;color:#e2e2e2;font-weight:normal;">Motion Blur</div>
<svg style="left:1254px;top:390.5px;" width="12" height="6" viewBox="0 0 12 6"><rect x="0.0" y="0" width="1.2" height="1.2" fill="#7a7a7a"/><rect x="0.0" y="3" width="1.2" height="1.2" fill="#7a7a7a"/><rect x="2.6" y="0" width="1.2" height="1.2" fill="#7a7a7a"/><rect x="2.6" y="3" width="1.2" height="1.2" fill="#7a7a7a"/><rect x="5.2" y="0" width="1.2" height="1.2" fill="#7a7a7a"/><rect x="5.2" y="3" width="1.2" height="1.2" fill="#7a7a7a"/><rect x="7.800000000000001" y="0" width="1.2" height="1.2" fill="#7a7a7a"/><rect x="7.800000000000001" y="3" width="1.2" height="1.2" fill="#7a7a7a"/></svg>
<div class="a" style="left:1087.2px;top:406px;width:184.79999999999995px;height:21.7px;background:#393939;border-radius:4px;"></div>
<svg style="left:1094px;top:412px;" width="10" height="10" viewBox="0 0 10 10"><path d="M3 1.5l3.5 3.5l-3.5 3.5" fill="none" stroke="#d8d8d8" stroke-width="1.1"/></svg>
<div class="t" style="left:1106.6px;top:410.5px;font-size:10px;line-height:14px;color:#e2e2e2;font-weight:normal;">Film</div>
<svg style="left:1254px;top:414.5px;" width="12" height="6" viewBox="0 0 12 6"><rect x="0.0" y="0" width="1.2" height="1.2" fill="#7a7a7a"/><rect x="0.0" y="3" width="1.2" height="1.2" fill="#7a7a7a"/><rect x="2.6" y="0" width="1.2" height="1.2" fill="#7a7a7a"/><rect x="2.6" y="3" width="1.2" height="1.2" fill="#7a7a7a"/><rect x="5.2" y="0" width="1.2" height="1.2" fill="#7a7a7a"/><rect x="5.2" y="3" width="1.2" height="1.2" fill="#7a7a7a"/><rect x="7.800000000000001" y="0" width="1.2" height="1.2" fill="#7a7a7a"/><rect x="7.800000000000001" y="3" width="1.2" height="1.2" fill="#7a7a7a"/></svg>
<div class="a" style="left:1087.2px;top:430px;width:184.79999999999995px;height:21.7px;background:#393939;border-radius:4px;"></div>
<svg style="left:1094px;top:436px;" width="10" height="10" viewBox="0 0 10 10"><path d="M3 1.5l3.5 3.5l-3.5 3.5" fill="none" stroke="#d8d8d8" stroke-width="1.1"/></svg>
<div class="t" style="left:1106.6px;top:434.5px;font-size:10px;line-height:14px;color:#e2e2e2;font-weight:normal;">Performance</div>
<svg style="left:1254px;top:438.5px;" width="12" height="6" viewBox="0 0 12 6"><rect x="0.0" y="0" width="1.2" height="1.2" fill="#7a7a7a"/><rect x="0.0" y="3" width="1.2" height="1.2" fill="#7a7a7a"/><rect x="2.6" y="0" width="1.2" height="1.2" fill="#7a7a7a"/><rect x="2.6" y="3" width="1.2" height="1.2" fill="#7a7a7a"/><rect x="5.2" y="0" width="1.2" height="1.2" fill="#7a7a7a"/><rect x="5.2" y="3" width="1.2" height="1.2" fill="#7a7a7a"/><rect x="7.800000000000001" y="0" width="1.2" height="1.2" fill="#7a7a7a"/><rect x="7.800000000000001" y="3" width="1.2" height="1.2" fill="#7a7a7a"/></svg>
<svg style="left:1232px;top:435px;" width="14" height="13" viewBox="0 0 14 13"><path d="M3 1v11 M7 1v11 M11 1v11" stroke="#e8e8e8" stroke-width="1.1"/><rect x="1.5" y="7" width="3" height="2" fill="#e8e8e8"/><rect x="5.5" y="4" width="3" height="2" fill="#e8e8e8"/><rect x="9.5" y="8" width="3" height="2" fill="#e8e8e8"/></svg>
<div class="a" style="left:1087.2px;top:454px;width:184.79999999999995px;height:21.7px;background:#393939;border-radius:4px;"></div>
<svg style="left:1094px;top:460px;" width="10" height="10" viewBox="0 0 10 10"><path d="M3 1.5l3.5 3.5l-3.5 3.5" fill="none" stroke="#d8d8d8" stroke-width="1.1"/></svg>
<div class="t" style="left:1106.6px;top:458.5px;font-size:10px;line-height:14px;color:#e2e2e2;font-weight:normal;">Bake</div>
<svg style="left:1254px;top:462.5px;" width="12" height="6" viewBox="0 0 12 6"><rect x="0.0" y="0" width="1.2" height="1.2" fill="#7a7a7a"/><rect x="0.0" y="3" width="1.2" height="1.2" fill="#7a7a7a"/><rect x="2.6" y="0" width="1.2" height="1.2" fill="#7a7a7a"/><rect x="2.6" y="3" width="1.2" height="1.2" fill="#7a7a7a"/><rect x="5.2" y="0" width="1.2" height="1.2" fill="#7a7a7a"/><rect x="5.2" y="3" width="1.2" height="1.2" fill="#7a7a7a"/><rect x="7.800000000000001" y="0" width="1.2" height="1.2" fill="#7a7a7a"/><rect x="7.800000000000001" y="3" width="1.2" height="1.2" fill="#7a7a7a"/></svg>
<div class="a" style="left:1087.2px;top:478px;width:184.79999999999995px;height:21.7px;background:#393939;border-radius:4px;"></div>
<svg style="left:1094px;top:484px;" width="10" height="10" viewBox="0 0 10 10"><path d="M3 1.5l3.5 3.5l-3.5 3.5" fill="none" stroke="#d8d8d8" stroke-width="1.1"/></svg>
<div class="t" style="left:1106.6px;top:482.5px;font-size:10px;line-height:14px;color:#e2e2e2;font-weight:normal;">Grease Pencil</div>
<svg style="left:1254px;top:486.5px;" width="12" height="6" viewBox="0 0 12 6"><rect x="0.0" y="0" width="1.2" height="1.2" fill="#7a7a7a"/><rect x="0.0" y="3" width="1.2" height="1.2" fill="#7a7a7a"/><rect x="2.6" y="0" width="1.2" height="1.2" fill="#7a7a7a"/><rect x="2.6" y="3" width="1.2" height="1.2" fill="#7a7a7a"/><rect x="5.2" y="0" width="1.2" height="1.2" fill="#7a7a7a"/><rect x="5.2" y="3" width="1.2" height="1.2" fill="#7a7a7a"/><rect x="7.800000000000001" y="0" width="1.2" height="1.2" fill="#7a7a7a"/><rect x="7.800000000000001" y="3" width="1.2" height="1.2" fill="#7a7a7a"/></svg>
<div class="a" style="left:1087.2px;top:502px;width:184.79999999999995px;height:21.7px;background:#393939;border-radius:4px;"></div>
<svg style="left:1094px;top:508px;" width="10" height="10" viewBox="0 0 10 10"><path d="M3 1.5l3.5 3.5l-3.5 3.5" fill="none" stroke="#d8d8d8" stroke-width="1.1"/></svg>
<div class="a" style="left:1106px;top:507.5px;width:10.5px;height:10.5px;background:#545454;border-radius:2px;"></div>
<div class="t" style="left:1119.7px;top:506.5px;font-size:10px;line-height:14px;color:#e2e2e2;font-weight:normal;">Freestyle</div>
<svg style="left:1254px;top:510.5px;" width="12" height="6" viewBox="0 0 12 6"><rect x="0.0" y="0" width="1.2" height="1.2" fill="#7a7a7a"/><rect x="0.0" y="3" width="1.2" height="1.2" fill="#7a7a7a"/><rect x="2.6" y="0" width="1.2" height="1.2" fill="#7a7a7a"/><rect x="2.6" y="3" width="1.2" height="1.2" fill="#7a7a7a"/><rect x="5.2" y="0" width="1.2" height="1.2" fill="#7a7a7a"/><rect x="5.2" y="3" width="1.2" height="1.2" fill="#7a7a7a"/><rect x="7.800000000000001" y="0" width="1.2" height="1.2" fill="#7a7a7a"/><rect x="7.800000000000001" y="3" width="1.2" height="1.2" fill="#7a7a7a"/></svg>
<div class="a" style="left:1087.2px;top:526px;width:184.79999999999995px;height:227.5px;background:#393939;border-radius:4px;"></div>
<svg style="left:1094px;top:532px;" width="10" height="10" viewBox="0 0 10 10"><path d="M1.5 3l3.5 3.5l3.5-3.5" fill="none" stroke="#d8d8d8" stroke-width="1.1"/></svg>
<div class="t" style="left:1106.6px;top:530.5px;font-size:10px;line-height:14px;color:#e2e2e2;font-weight:normal;">Color Management</div>
<svg style="left:1254px;top:534.5px;" width="12" height="6" viewBox="0 0 12 6"><rect x="0.0" y="0" width="1.2" height="1.2" fill="#7a7a7a"/><rect x="0.0" y="3" width="1.2" height="1.2" fill="#7a7a7a"/><rect x="2.6" y="0" width="1.2" height="1.2" fill="#7a7a7a"/><rect x="2.6" y="3" width="1.2" height="1.2" fill="#7a7a7a"/><rect x="5.2" y="0" width="1.2" height="1.2" fill="#7a7a7a"/><rect x="5.2" y="3" width="1.2" height="1.2" fill="#7a7a7a"/><rect x="7.800000000000001" y="0" width="1.2" height="1.2" fill="#7a7a7a"/><rect x="7.800000000000001" y="3" width="1.2" height="1.2" fill="#7a7a7a"/></svg>
<div class="t" style="right:121.5px;top:557.5px;font-size:10px;line-height:14px;color:#d8d8d8;font-weight:normal;text-align:right;">Display</div>
<div class="a" style="left:1167.5px;top:557px;width:96px;height:14.5px;background:#282828;border-radius:3px;"></div>
<div class="t" style="left:1173px;top:557.7px;font-size:10px;line-height:14px;color:#e6e6e6;font-weight:normal;">sRGB</div>
<svg style="left:1254px;top:561px;" width="8" height="6" viewBox="0 0 8 6"><path d="M1 1.5l3 3l3-3" fill="none" stroke="#e0e0e0" stroke-width="1.2"/></svg>
<div class="t" style="right:121.5px;top:584.0px;font-size:10px;line-height:14px;color:#d8d8d8;font-weight:normal;text-align:right;">View</div>
<div class="a" style="left:1167.5px;top:583.5px;width:96px;height:14.5px;background:#282828;border-radius:3px;"></div>
<div class="t" style="left:1173px;top:584.2px;font-size:10px;line-height:14px;color:#e6e6e6;font-weight:normal;">Filmic</div>
<svg style="left:1254px;top:587.5px;" width="8" height="6" viewBox="0 0 8 6"><path d="M1 1.5l3 3l3-3" fill="none" stroke="#e0e0e0" stroke-width="1.2"/></svg>
<div class="t" style="right:121.5px;top:603.5px;font-size:10px;line-height:14px;color:#d8d8d8;font-weight:normal;text-align:right;">Look</div>
<div class="a" style="left:1167.5px;top:603px;width:96px;height:14.5px;background:#282828;border-radius:3px;"></div>
<div class="t" style="left:1173px;top:603.7px;font-size:10px;line-height:14px;color:#e6e6e6;font-weight:normal;">High Contrast</div>
<svg style="left:1254px;top:607px;" width="8" height="6" viewBox="0 0 8 6"><path d="M1 1.5l3 3l3-3" fill="none" stroke="#e0e0e0" stroke-width="1.2"/></svg>
<div class="t" style="right:121.5px;top:623.4px;font-size:10px;line-height:14px;color:#d8d8d8;font-weight:normal;text-align:right;">Exposure</div>
<div class="a" style="left:1167.5px;top:622.5px;width:96px;height:15px;background:#545454;border-radius:3px;"></div>
<div class="a" style="left:1167.5px;top:622.5px;width:62.2px;height:15px;background:#4772b3;border-radius:0px;border-radius:3px 0 0 3px"></div>
<div class="t" style="left:1115.5px;width:200px;text-align:center;top:623.5px;font-size:10px;line-height:14px;color:#f0f0f0;font-weight:normal;">3.000</div>
<div class="t" style="right:121.5px;top:642.5px;font-size:10px;line-height:14px;color:#d8d8d8;font-weight:normal;text-align:right;">Gamma</div>
<div class="a" style="left:1167.5px;top:641.8px;width:96px;height:15px;background:#545454;border-radius:3px;"></div>
<div class="a" style="left:1167.5px;top:641.8px;width:17.5px;height:15px;background:#4772b3;border-radius:0px;border-radius:3px 0 0 3px"></div>
<div class="t" style="left:1115.5px;width:200px;text-align:center;top:642.8px;font-size:10px;line-height:14px;color:#f0f0f0;font-weight:normal;">1.000</div>
<svg style="left:1105.5px;top:672.2px;" width="10" height="10" viewBox="0 0 10 10"><path d="M3 1.5l3.5 3.5l-3.5 3.5" fill="none" stroke="#d8d8d8" stroke-width="1.1"/></svg>
<div class="a" style="left:1118.8px;top:671.9000000000001px;width:10.6px;height:10.6px;background:#545454;border-radius:2px;"></div>
<div class="t" style="left:1132px;top:670.7px;font-size:10px;line-height:14px;color:#e2e2e2;font-weight:normal;">Curves</div>
<svg style="left:1105.5px;top:694.4px;" width="10" height="10" viewBox="0 0 10 10"><path d="M3 1.5l3.5 3.5l-3.5 3.5" fill="none" stroke="#d8d8d8" stroke-width="1.1"/></svg>
<div class="a" style="left:1118.8px;top:694.1px;width:10.6px;height:10.6px;background:#545454;border-radius:2px;"></div>
<div class="t" style="left:1132px;top:692.9px;font-size:10px;line-height:14px;color:#e2e2e2;font-weight:normal;">White Balance</div>
<svg style="left:1210px;top:693px;" width="14" height="13" viewBox="0 0 14 13"><path d="M3 1v11 M7 1v11 M11 1v11" stroke="#e8e8e8" stroke-width="1.1"/><rect x="1.5" y="7" width="3" height="2" fill="#e8e8e8"/><rect x="5.5" y="4" width="3" height="2" fill="#e8e8e8"/><rect x="9.5" y="8" width="3" height="2" fill="#e8e8e8"/></svg>
<svg style="left:1237px;top:692px;" width="15" height="15" viewBox="0 0 15 15"><path d="M2 13 L2.5 11 L8.5 5 L10 6.5 L4 12.5 Z" fill="none" stroke="#f0f0f0" stroke-width="1.1"/><path d="M7.5 4 L11 7.5 M9.5 5.5 L12 3 A1.5 1.5 0 0 1 13 5 L11 7.5" stroke="#f0f0f0" stroke-width="1.6" fill="#f0f0f0"/></svg>
<svg style="left:1105.5px;top:716.5px;" width="10" height="10" viewBox="0 0 10 10"><path d="M3 1.5l3.5 3.5l-3.5 3.5" fill="none" stroke="#d8d8d8" stroke-width="1.1"/></svg>
<div class="t" style="left:1119.5px;top:715.0px;font-size:10px;line-height:14px;color:#e2e2e2;font-weight:normal;">Working Space</div>
<svg style="left:1105.5px;top:738.7px;" width="10" height="10" viewBox="0 0 10 10"><path d="M3 1.5l3.5 3.5l-3.5 3.5" fill="none" stroke="#d8d8d8" stroke-width="1.1"/></svg>
<div class="t" style="left:1119.5px;top:737.2px;font-size:10px;line-height:14px;color:#e2e2e2;font-weight:normal;">Advanced</div>
<div class="a" style="left:1273.3px;top:457px;width:2px;height:291px;background:#4a4a4a;border-radius:1px;"></div>
<div class="a" style="left:1px;top:705.5px;width:1050px;height:50.5px;background:#1d1d1d;border-radius:6px;"></div>
<div class="a" style="left:1px;top:705.5px;width:1050px;height:24px;background:#303030;border-radius:0px;border-radius:6px 6px 0 0"></div>
<div class="a" style="left:9.1px;top:710px;width:27px;height:14.8px;background:#262626;border-radius:4px;"></div>
<svg style="left:11px;top:710px;" width="24" height="15" viewBox="0 0 24 15"><circle cx="8" cy="7.5" r="6" fill="#f0f0f0"/><path d="M9.5 3.5l-3 4l3 4" fill="none" stroke="#262626" stroke-width="1.6"/><path d="M15.5 6.5l2.5 2.5l2.5-2.5" fill="none" stroke="#e0e0e0" stroke-width="1.1"/></svg>
<div class="t" style="left:47.7px;top:711.0px;font-size:10px;line-height:14px;color:#dedede;font-weight:normal;">View</div>
<div class="t" style="left:82.3px;top:711.0px;font-size:10px;line-height:14px;color:#dedede;font-weight:normal;">Marker</div>
<div class="a" style="left:127px;top:710px;width:61px;height:14.8px;background:#262626;border-radius:4px;"></div>
<div class="t" style="left:132.4px;top:711.0px;font-size:10px;line-height:14px;color:#e6e6e6;font-weight:normal;">Playback</div>
<svg style="left:178px;top:715px;" width="8" height="6" viewBox="0 0 8 6"><path d="M1 1.5l3 3l3-3" fill="none" stroke="#e0e0e0" stroke-width="1.1"/></svg>
<div class="a" style="left:394.3px;top:709.5px;width:16.3px;height:15.8px;background:#4a4a4a;border-radius:0px;border-radius:4px 0 0 4px"></div>
<div class="a" style="left:410.6px;top:709.5px;width:13.7px;height:15.8px;background:#3a3a3a;border-radius:0px;border-radius:0 4px 4px 0"></div>
<svg style="left:394.3px;top:709.5px;" width="16" height="16" viewBox="0 0 16 16"><circle cx="8" cy="8" r="4.6" fill="none" stroke="#cfcfcf" stroke-width="1.2"/></svg>
<svg style="left:413px;top:715px;" width="8" height="6" viewBox="0 0 8 6"><path d="M1 1.5l3 3l3-3" fill="none" stroke="#666" stroke-width="1"/></svg>
<div class="a" style="left:434.4px;top:709.5px;width:104.8px;height:15.8px;background:#474747;border-radius:4px;"></div>
<svg style="left:434.59999999999997px;top:709.5px;" width="17" height="16" viewBox="0 0 17 16"><rect x="4" y="3.8" width="1.8" height="8.4" fill="#f0f0f0"/><path d="M13.5 3.8v8.4l-7-4.2z" fill="#f0f0f0"/></svg>
<div class="a" style="left:451.37px;top:709.5px;width:1px;height:15.8px;background:#3c3c3c;border-radius:0px;"></div>
<svg style="left:452.07px;top:709.5px;" width="17" height="16" viewBox="0 0 17 16"><path d="M2.5 8l4-4l4 4l-4 4z M15.5 4.5v7l-4.5-3.5z" fill="#f0f0f0"/></svg>
<div class="a" style="left:468.84px;top:709.5px;width:1px;height:15.8px;background:#3c3c3c;border-radius:0px;"></div>
<svg style="left:469.53999999999996px;top:709.5px;" width="17" height="16" viewBox="0 0 17 16"><path d="M12.8 3.2v9.6l-8.3-4.8z" fill="#f0f0f0"/></svg>
<div class="a" style="left:486.30999999999995px;top:709.5px;width:1px;height:15.8px;background:#3c3c3c;border-radius:0px;"></div>
<svg style="left:487.00999999999993px;top:709.5px;" width="17" height="16" viewBox="0 0 17 16"><path d="M5 3.2v9.6l8.3-4.8z" fill="#f0f0f0"/></svg>
<div class="a" style="left:503.78px;top:709.5px;width:1px;height:15.8px;background:#3c3c3c;border-radius:0px;"></div>
<svg style="left:504.47999999999996px;top:709.5px;" width="17" height="16" viewBox="0 0 17 16"><path d="M2 4.5v7l4.5-3.5z M7.5 8l4-4l4 4l-4 4z" fill="#f0f0f0"/></svg>
<div class="a" style="left:521.25px;top:709.5px;width:1px;height:15.8px;background:#3c3c3c;border-radius:0px;"></div>
<svg style="left:521.95px;top:709.5px;" width="17" height="16" viewBox="0 0 17 16"><path d="M4.3 3.8v8.4l7-4.2z" fill="#f0f0f0"/><rect x="12" y="3.8" width="1.8" height="8.4" fill="#f0f0f0"/></svg>
<div class="a" style="left:545.6px;top:709.5px;width:34.4px;height:15.8px;background:#474747;border-radius:0px;border-radius:4px 0 0 4px"></div>
<div class="a" style="left:562.5px;top:709.5px;width:1px;height:15.8px;background:#3c3c3c;border-radius:0px;"></div>
<div class="a" style="left:580px;top:709.5px;width:16.8px;height:15.8px;background:#262626;border-radius:0px;border-radius:0 4px 4px 0"></div>
<svg style="left:547px;top:709.5px;" width="16" height="16" viewBox="0 0 16 16"><path d="M11 3.8v8.4l-7-4.2z" fill="#f0f0f0"/><rect x="12" y="3.8" width="1.8" height="8.4" fill="#f0f0f0"/></svg>
<svg style="left:564px;top:709.5px;" width="16" height="16" viewBox="0 0 16 16"><rect x="3" y="3.8" width="1.8" height="8.4" fill="#f0f0f0"/><path d="M6 3.8v8.4l7-4.2z" fill="#f0f0f0"/></svg>
<svg style="left:584px;top:715px;" width="8" height="6" viewBox="0 0 8 6"><path d="M1 1.5l3 3l3-3" fill="none" stroke="#e0e0e0" stroke-width="1.1"/></svg>
<div class="a" style="left:603.2px;top:709.5px;width:16.8px;height:15.8px;background:#474747;border-radius:0px;border-radius:4px 0 0 4px"></div>
<div class="a" style="left:620px;top:709.5px;width:16.3px;height:15.8px;background:#262626;border-radius:0px;border-radius:0 4px 4px 0"></div>
<svg style="left:603.2px;top:709.5px;" width="17" height="16" viewBox="0 0 17 16"><path d="M3.5 11V8A5 5 0 0 1 13.5 8V11 M6 11V8A2.5 2.5 0 0 1 11 8V11" fill="none" stroke="#cfcfcf" stroke-width="1"/><rect x="3" y="12.5" width="11" height="1.2" fill="#aaa"/></svg>
<svg style="left:624px;top:715px;" width="8" height="6" viewBox="0 0 8 6"><path d="M1 1.5l3 3l3-3" fill="none" stroke="#e0e0e0" stroke-width="1.1"/></svg>
<div class="a" style="left:751px;top:709.4px;width:65.3px;height:16.4px;background:#474747;border-radius:4px;"></div>
<div class="t" style="left:683.6px;width:200px;text-align:center;top:711.1px;font-size:10px;line-height:14px;color:#e8e8e8;font-weight:normal;">1</div>
<div class="a" style="left:822.5px;top:709.4px;width:171px;height:16.4px;background:#474747;border-radius:4px;"></div>
<div class="a" style="left:822.5px;top:709.4px;width:16.5px;height:16.4px;background:#3a3a3a;border-radius:0px;border-radius:4px 0 0 4px"></div>
<svg style="left:823px;top:710px;" width="16" height="16" viewBox="0 0 16 16"><circle cx="8" cy="9" r="5" fill="none" stroke="#e8e8e8" stroke-width="1.3"/><path d="M8 9V6.5 M6.5 2.8h3 M12 4.5l1 -1" stroke="#e8e8e8" stroke-width="1.2"/></svg>
<div class="a" style="left:917.5px;top:709.4px;width:1px;height:16.4px;background:#2e2e2e;border-radius:0px;"></div>
<div class="t" style="left:853.2px;top:711.1px;font-size:10px;line-height:14px;color:#e8e8e8;font-weight:normal;">Start</div>
<div class="t" style="left:900.5px;top:711.1px;font-size:10px;line-height:14px;color:#e8e8e8;font-weight:normal;">1</div>
<div class="t" style="left:932px;top:711.1px;font-size:10px;line-height:14px;color:#e8e8e8;font-weight:normal;">End</div>
<div class="t" style="left:963.5px;top:711.1px;font-size:10px;line-height:14px;color:#e8e8e8;font-weight:normal;">250</div>
<div class="a" style="left:1008.3px;top:709.5px;width:17.2px;height:15.8px;background:#4772b3;border-radius:0px;border-radius:4px 0 0 4px"></div>
<div class="a" style="left:1025.5px;top:709.5px;width:16px;height:15.8px;background:#262626;border-radius:0px;border-radius:0 4px 4px 0"></div>
<svg style="left:1008.3px;top:709.5px;" width="17" height="16" viewBox="0 0 17 16"><circle cx="10" cy="6.5" r="4" fill="#f0f0f0"/><circle cx="7" cy="10" r="4" fill="none" stroke="#f0f0f0" stroke-width="1.2"/></svg>
<svg style="left:1029px;top:715px;" width="8" height="6" viewBox="0 0 8 6"><path d="M1 1.5l3 3l3-3" fill="none" stroke="#e0e0e0" stroke-width="1.1"/></svg>
<div class="t" style="left:-17.700000000000003px;width:200px;text-align:center;top:733.1px;font-size:10px;line-height:14px;color:#a8a8a8;font-weight:normal;">12</div>
<div class="t" style="left:29.150000000000006px;width:200px;text-align:center;top:733.1px;font-size:10px;line-height:14px;color:#a8a8a8;font-weight:normal;">24</div>
<div class="t" style="left:76.0px;width:200px;text-align:center;top:733.1px;font-size:10px;line-height:14px;color:#a8a8a8;font-weight:normal;">36</div>
<div class="t" style="left:122.85000000000002px;width:200px;text-align:center;top:733.1px;font-size:10px;line-height:14px;color:#a8a8a8;font-weight:normal;">48</div>
<div class="t" style="left:169.7px;width:200px;text-align:center;top:733.1px;font-size:10px;line-height:14px;color:#a8a8a8;font-weight:normal;">60</div>
<div class="t" style="left:216.55px;width:200px;text-align:center;top:733.1px;font-size:10px;line-height:14px;color:#a8a8a8;font-weight:normal;">72</div>
<div class="t" style="left:263.40000000000003px;width:200px;text-align:center;top:733.1px;font-size:10px;line-height:14px;color:#a8a8a8;font-weight:normal;">84</div>
<div class="t" style="left:310.25px;width:200px;text-align:center;top:733.1px;font-size:10px;line-height:14px;color:#a8a8a8;font-weight:normal;">96</div>
<div class="t" style="left:357.1px;width:200px;text-align:center;top:733.1px;font-size:10px;line-height:14px;color:#a8a8a8;font-weight:normal;">108</div>
<div class="t" style="left:403.95000000000005px;width:200px;text-align:center;top:733.1px;font-size:10px;line-height:14px;color:#a8a8a8;font-weight:normal;">120</div>
<div class="t" style="left:450.79999999999995px;width:200px;text-align:center;top:733.1px;font-size:10px;line-height:14px;color:#a8a8a8;font-weight:normal;">132</div>
<div class="t" style="left:497.65px;width:200px;text-align:center;top:733.1px;font-size:10px;line-height:14px;color:#a8a8a8;font-weight:normal;">144</div>
<div class="t" style="left:544.5px;width:200px;text-align:center;top:733.1px;font-size:10px;line-height:14px;color:#a8a8a8;font-weight:normal;">156</div>
<div class="t" style="left:591.35px;width:200px;text-align:center;top:733.1px;font-size:10px;line-height:14px;color:#a8a8a8;font-weight:normal;">168</div>
<div class="t" style="left:638.1999999999999px;width:200px;text-align:center;top:733.1px;font-size:10px;line-height:14px;color:#a8a8a8;font-weight:normal;">180</div>
<div class="t" style="left:685.05px;width:200px;text-align:center;top:733.1px;font-size:10px;line-height:14px;color:#a8a8a8;font-weight:normal;">192</div>
<div class="t" style="left:731.9px;width:200px;text-align:center;top:733.1px;font-size:10px;line-height:14px;color:#a8a8a8;font-weight:normal;">204</div>
<div class="t" style="left:778.75px;width:200px;text-align:center;top:733.1px;font-size:10px;line-height:14px;color:#a8a8a8;font-weight:normal;">216</div>
<div class="t" style="left:825.6px;width:200px;text-align:center;top:733.1px;font-size:10px;line-height:14px;color:#a8a8a8;font-weight:normal;">228</div>
<div class="t" style="left:872.4499999999999px;width:200px;text-align:center;top:733.1px;font-size:10px;line-height:14px;color:#a8a8a8;font-weight:normal;">240</div>
<div class="t" style="left:919.3px;width:200px;text-align:center;top:733.1px;font-size:10px;line-height:14px;color:#a8a8a8;font-weight:normal;">252</div>
<div class="a" style="left:12px;top:750.2px;width:1034px;height:5px;background:#2e2e2e;border-radius:0px;"></div>
<div class="a" style="left:82.3px;top:750.2px;width:1px;height:5px;background:#3c3c3c;border-radius:0px;"></div>
<div class="a" style="left:129.15px;top:750.2px;width:1px;height:5px;background:#3c3c3c;border-radius:0px;"></div>
<div class="a" style="left:176.0px;top:750.2px;width:1px;height:5px;background:#3c3c3c;border-radius:0px;"></div>
<div class="a" style="left:222.85000000000002px;top:750.2px;width:1px;height:5px;background:#3c3c3c;border-radius:0px;"></div>
<div class="a" style="left:269.7px;top:750.2px;width:1px;height:5px;background:#3c3c3c;border-radius:0px;"></div>
<div class="a" style="left:316.55px;top:750.2px;width:1px;height:5px;background:#3c3c3c;border-radius:0px;"></div>
<div class="a" style="left:363.40000000000003px;top:750.2px;width:1px;height:5px;background:#3c3c3c;border-radius:0px;"></div>
<div class="a" style="left:410.25px;top:750.2px;width:1px;height:5px;background:#3c3c3c;border-radius:0px;"></div>
<div class="a" style="left:457.1px;top:750.2px;width:1px;height:5px;background:#3c3c3c;border-radius:0px;"></div>
<div class="a" style="left:503.95000000000005px;top:750.2px;width:1px;height:5px;background:#3c3c3c;border-radius:0px;"></div>
<div class="a" style="left:550.8px;top:750.2px;width:1px;height:5px;background:#3c3c3c;border-radius:0px;"></div>
<div class="a" style="left:597.65px;top:750.2px;width:1px;height:5px;background:#3c3c3c;border-radius:0px;"></div>
<div class="a" style="left:644.5px;top:750.2px;width:1px;height:5px;background:#3c3c3c;border-radius:0px;"></div>
<div class="a" style="left:691.35px;top:750.2px;width:1px;height:5px;background:#3c3c3c;border-radius:0px;"></div>
<div class="a" style="left:738.1999999999999px;top:750.2px;width:1px;height:5px;background:#3c3c3c;border-radius:0px;"></div>
<div class="a" style="left:785.05px;top:750.2px;width:1px;height:5px;background:#3c3c3c;border-radius:0px;"></div>
<div class="a" style="left:831.9px;top:750.2px;width:1px;height:5px;background:#3c3c3c;border-radius:0px;"></div>
<div class="a" style="left:878.75px;top:750.2px;width:1px;height:5px;background:#3c3c3c;border-radius:0px;"></div>
<div class="a" style="left:925.6px;top:750.2px;width:1px;height:5px;background:#3c3c3c;border-radius:0px;"></div>
<div class="a" style="left:972.4499999999999px;top:750.2px;width:1px;height:5px;background:#3c3c3c;border-radius:0px;"></div>
<div class="a" style="left:1019.3px;top:750.2px;width:1px;height:5px;background:#3c3c3c;border-radius:0px;"></div>
<div class="a" style="left:1066.15px;top:750.2px;width:1px;height:5px;background:#3c3c3c;border-radius:0px;"></div>
<div class="a" style="left:30px;top:731.5px;width:19.8px;height:18.3px;background:#4772b3;border-radius:3px;"></div>
<svg style="left:34px;top:748px;" width="12" height="9" viewBox="0 0 12 9"><path d="M1 0h10l-5 5z" fill="#4772b3"/><rect x="5.3" y="4" width="1.4" height="4" fill="#4772b3"/></svg>
<div class="t" style="left:-60.1px;width:200px;text-align:center;top:733.7px;font-size:10px;line-height:14px;color:#f4f4f4;font-weight:bold;">1</div>
<svg style="left:4px;top:758px;" width="11" height="17" viewBox="0 0 11 17"><rect x="1" y="1" width="9" height="15" rx="4" fill="none" stroke="#bdbdbd" stroke-width="1.1"/><rect x="2.2" y="2.2" width="3" height="5" fill="#bdbdbd"/></svg>
<div class="t" style="left:17.3px;top:760.1px;font-size:10.5px;line-height:14px;color:#bdbdbd;font-weight:normal;">Select Toggle</div>
<svg style="left:87.3px;top:758px;" width="11" height="17" viewBox="0 0 11 17"><rect x="1" y="1" width="9" height="15" rx="4" fill="none" stroke="#bdbdbd" stroke-width="1.1"/><rect x="4.5" y="3" width="2" height="4" fill="#bdbdbd"/></svg>
<div class="t" style="left:100.5px;top:760.1px;font-size:10.5px;line-height:14px;color:#bdbdbd;font-weight:normal;">Dolly View</div>
<svg style="left:156.8px;top:758px;" width="11" height="17" viewBox="0 0 11 17"><rect x="1" y="1" width="9" height="15" rx="4" fill="none" stroke="#bdbdbd" stroke-width="1.1"/><rect x="5.8" y="2.2" width="3" height="5" fill="#bdbdbd"/></svg>
<div class="t" style="left:169px;top:760.1px;font-size:10.5px;line-height:14px;color:#bdbdbd;font-weight:normal;">Lasso Select</div>
<svg style="left:1222px;top:759px;" width="15" height="15" viewBox="0 0 15 15"><circle cx="7.5" cy="7.5" r="5.5" fill="none" stroke="#aaa" stroke-width="1.1"/><path d="M2 7.5h11 M7.5 2 Q4 7.5 7.5 13 M7.5 2 Q11 7.5 7.5 13 M1 1l13 13" stroke="#aaa" stroke-width="1" fill="none"/></svg>
<div class="a" style="left:1242px;top:760px;width:1px;height:12px;background:#777;border-radius:0px;"></div>
<div class="t" style="left:1246.5px;top:760.1px;font-size:10px;line-height:14px;color:#b0b0b0;font-weight:normal;">5.0.0</div></body></html>
